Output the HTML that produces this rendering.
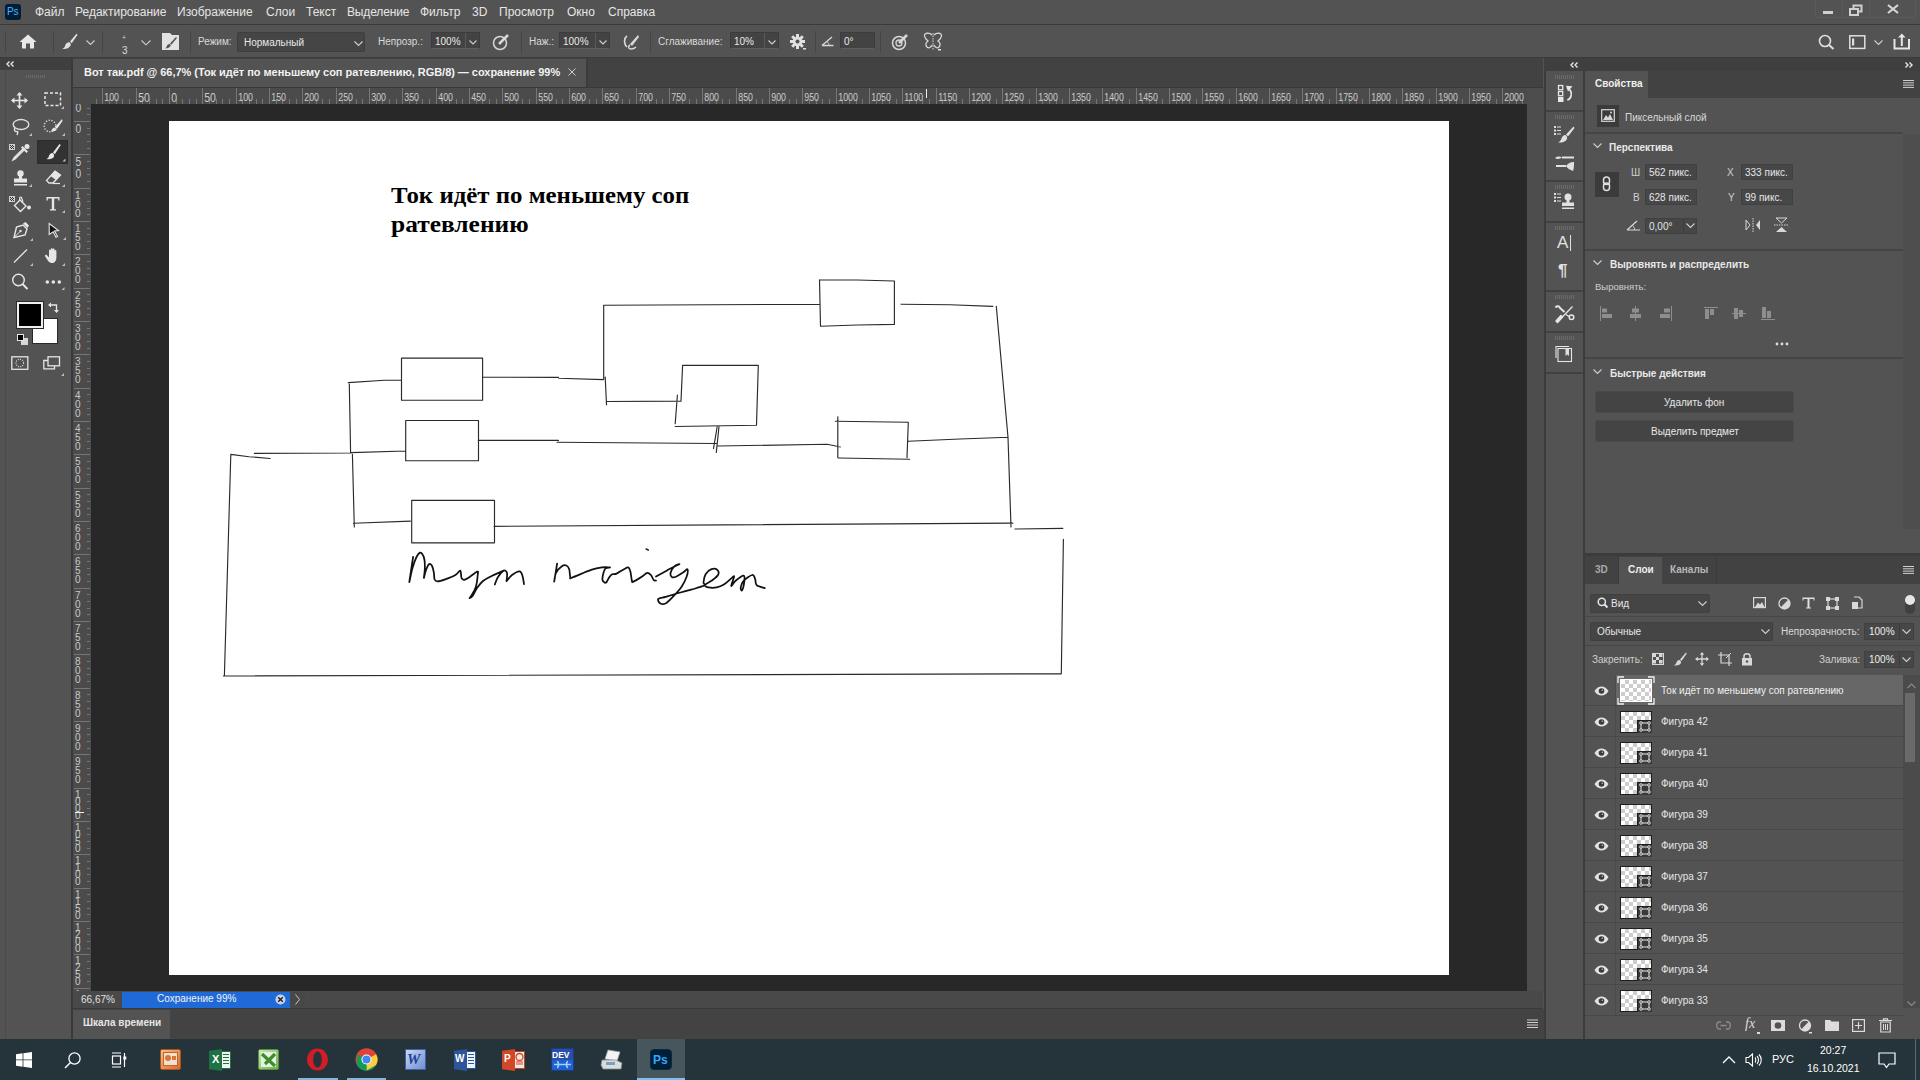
<!DOCTYPE html>
<html><head><meta charset="utf-8">
<style>
*{margin:0;padding:0;box-sizing:border-box}
html,body{width:1920px;height:1080px;overflow:hidden;background:#535353;font-family:"Liberation Sans",sans-serif;color:#d9d9d9}
.a{position:absolute}
.t{position:absolute;white-space:nowrap;line-height:1}
svg{position:absolute;overflow:visible}
</style></head><body>
<!-- MENU BAR -->
<div class="a" style="left:0;top:0;width:1920px;height:24px;background:#535353"></div>
<div class="a" style="left:0;top:24px;width:1920px;height:1px;background:#3a3a3a"></div>
<!-- OPTIONS BAR -->
<div class="a" style="left:0;top:25px;width:1920px;height:33px;background:#535353"></div>
<div class="a" style="left:0;top:57px;width:1920px;height:1px;background:#3b3b3b"></div>
<!-- LEFT TOOLBAR -->
<div class="a" style="left:0;top:58px;width:72px;height:981px;background:#535353"></div>
<div class="a" style="left:0;top:58px;width:71px;height:12px;background:#3f3f3f"></div>
<div class="a" style="left:71px;top:58px;width:2px;height:981px;background:#3a3a3a"></div>
<!-- TAB BAR -->
<div class="a" style="left:73px;top:58px;width:1470px;height:30px;background:#424242"></div>
<div class="a" style="left:73px;top:59px;width:513px;height:28px;background:#535353"></div>
<div class="a" style="left:73px;top:87px;width:1470px;height:1px;background:#383838"></div><div class="a" style="left:586px;top:58px;width:2px;height:29px;background:#3c3c3c"></div>
<!-- RULERS -->
<div class="a" style="left:73px;top:88px;width:1454px;height:16px;background:#4b4b4b"></div>
<div class="a" style="left:73px;top:104px;width:18px;height:887px;background:#4b4b4b"></div>
<!-- CANVAS -->
<div class="a" style="left:91px;top:104px;width:1436px;height:887px;background:#282828"></div>
<div class="a" style="left:169px;top:121px;width:1280px;height:854px;background:#ffffff"></div>
<!--CANVAS START--><div class="t" style="left:391px;top:184px;font-size:23px;font-weight:bold;font-family:'Liberation Serif',serif;color:#000;transform:scaleX(1.08);transform-origin:0 0">Ток идёт по меньшему соп</div><div class="t" style="left:391px;top:213px;font-size:23px;font-weight:bold;font-family:'Liberation Serif',serif;color:#000;transform:scaleX(1.105);transform-origin:0 0">ратевлению</div><svg style="left:0;top:0" width="1920" height="1080"><g fill="none" stroke-linecap="round" stroke-linejoin="round"><path d="M230.8 454.4L224.4 675.5 M223.4 676.0L1061.3 673.8 M1061.3 673.8L1063.4 539.4 M1015.0 529.0L1062.8 528.4 M230.8 454.4L249.0 456.7L270.2 458.5 M254.4 453.4L351.0 453.0 M349.3 384.0L350.6 453.0 M352.4 454.3L354.3 527.0 M348.3 382.6L384.4 380.2L401.5 380.2 M401.5 358.1L482.6 358.1L482.6 400.2L401.5 400.2L401.5 358.1 M482.6 377.2L558.5 377.4 M558.9 378.3L603.3 379.6 M603.7 305.2L603.7 379.3 M603.7 305.2L820.0 304.2 M605.2 377.0L606.5 404.8 M606.5 401.5L681.0 401.1 M681.0 401.1L682.6 365.4L758.3 365.4L756.5 425.2L675.2 426.5 M677.4 395.0L675.2 423.7 M717.2 426.5L713.5 448.7 M719.0 426.5L716.3 452.4 M351.0 452.6L405.7 451.0 M405.7 420.5L478.5 420.5L478.5 460.7L405.7 460.7L405.7 420.5 M478.3 440.4L558.5 440.4 M557.0 442.2L716.3 443.5 M717.2 446.0L827.2 444.3L840.4 447.0 M819.5 279.8L857.0 280.0L894.4 281.0L894.4 324.4L857.0 325.0L820.5 326.2L819.5 279.8 M901.1 304.2L950.0 304.8L992.8 306.4 M996.3 306.4L1008.0 437.2L1011.0 527.0 M835.4 421.3L908.3 422.3L907.0 457.6 M838.4 458.0L909.7 459.2 M837.8 416.8L837.8 457.6 M908.3 441.3L960.0 439.0L1008.0 437.2 M353.5 523.3L410.4 521.1 M411.7 500.4L494.5 500.4L494.5 542.8L411.7 542.8L411.7 500.4 M494.0 526.3L1012.8 523.1" stroke="#2a2a2a" stroke-width="1.15"/><path d="M413.1 556.8C412.5 561.0 409.9 578.0 409.3 582.2 M409.5 581.5C410.0 579.2 411.3 572.1 412.5 568.0C413.7 563.9 415.2 559.6 416.5 557.0C417.8 554.4 419.0 553.0 420.0 552.6C421.0 552.2 421.9 553.3 422.6 554.5C423.4 555.7 424.1 557.5 424.5 560.0C424.9 562.5 424.9 566.2 424.8 569.2C424.7 572.2 424.0 576.5 423.9 577.9 M423.9 577.9C424.3 576.5 425.4 571.5 426.3 569.2C427.2 566.9 428.2 564.6 429.2 564.1C430.2 563.6 431.3 564.5 432.1 566.0C432.9 567.5 433.5 570.5 433.9 572.8C434.3 575.0 434.0 578.1 434.6 579.5C435.2 580.9 435.7 581.4 437.5 581.4C439.3 581.4 442.2 580.5 445.2 579.4C448.2 578.3 453.0 576.4 455.4 575.0C457.8 573.6 458.9 571.2 459.8 570.8C460.7 570.4 460.5 571.3 460.8 572.5C461.1 573.7 461.0 577.0 461.6 578.2C462.2 579.4 462.9 580.0 464.2 579.8C465.5 579.6 467.1 578.6 469.3 577.2C471.5 575.8 475.9 572.0 477.3 571.6C478.7 571.2 477.9 572.5 477.7 575.0C477.5 577.5 476.9 583.3 475.9 586.7C474.9 590.1 472.6 593.5 471.5 595.4C470.4 597.3 469.4 598.2 469.6 598.2C469.8 598.2 471.7 597.1 472.9 595.4C474.1 593.7 475.3 590.4 477.0 588.0C478.7 585.6 480.6 583.0 483.0 581.0C485.4 579.0 487.8 577.9 491.2 576.2C494.6 574.5 501.5 571.5 503.6 570.6 M494.8 584.5C495.3 583.2 496.5 579.3 498.0 577.0C499.5 574.7 502.1 571.3 503.6 570.6C505.1 569.9 506.5 571.2 507.0 573.0C507.5 574.8 506.6 579.8 506.5 581.2 M506.5 581.2C507.4 580.2 509.8 576.6 512.0 575.0C514.2 573.4 517.9 571.2 519.6 571.4C521.4 571.6 521.8 573.9 522.5 576.0C523.2 578.1 523.8 582.8 524.0 584.1 M557.1 563.7C556.6 566.7 554.7 578.6 554.2 581.6 M554.2 581.6C554.5 580.1 554.7 575.3 556.0 572.8C557.3 570.2 560.2 567.5 561.9 566.3C563.6 565.1 565.1 565.0 566.3 565.5C567.5 566.0 568.5 567.2 569.2 569.2C569.9 571.2 569.8 575.8 570.3 577.2C570.8 578.6 568.6 578.8 572.1 577.6C575.6 576.4 586.1 571.6 591.1 569.9C596.1 568.2 598.9 567.8 602.0 567.4C605.1 567.0 608.7 567.4 610.0 567.4 M610.0 567.4C609.3 567.6 606.7 567.5 605.6 568.4C604.5 569.3 604.0 571.0 603.5 572.8C603.0 574.6 602.3 577.8 602.4 579.4C602.5 581.0 603.5 581.8 604.2 582.3C604.9 582.8 605.5 583.1 606.4 582.3C607.2 581.4 608.3 578.5 609.3 577.2C610.3 575.9 611.0 574.9 612.2 574.3C613.4 573.7 614.7 574.5 616.6 573.6C618.5 572.8 622.0 570.2 623.9 569.2C625.8 568.2 627.2 567.0 628.3 567.4C629.4 567.8 629.8 569.2 630.4 571.4C631.0 573.6 631.4 579.1 631.9 580.8C632.4 582.5 631.7 582.3 633.4 581.6C635.1 580.9 639.8 578.0 642.1 576.5C644.4 575.0 645.7 573.0 647.2 572.8C648.7 572.5 649.8 573.8 650.9 575.0C652.0 576.2 652.9 579.2 653.8 580.1C654.6 581.0 655.6 580.4 656.0 580.5 M656.0 576.5C657.8 575.5 663.1 572.6 667.0 570.5C670.9 568.4 677.3 565.2 679.4 564.1 M679.4 564.1C678.5 564.5 675.8 564.8 674.3 566.3C672.8 567.8 671.0 571.0 670.6 572.8C670.2 574.6 671.1 576.6 672.1 577.2C673.1 577.8 674.5 577.4 676.5 576.5C678.5 575.6 682.0 573.3 683.8 572.1C685.6 570.9 686.9 568.5 687.4 569.2C687.9 569.9 687.7 573.6 686.7 576.5C685.7 579.4 683.9 583.3 681.6 586.7C679.3 590.1 675.5 594.1 672.8 596.9C670.1 599.7 667.6 602.4 665.5 603.5C663.4 604.6 661.6 604.2 660.4 603.5C659.2 602.8 657.4 600.2 658.2 599.1C659.1 598.0 662.7 597.8 665.5 596.9C668.3 596.0 670.7 595.2 675.0 594.0C679.3 592.8 686.2 591.0 691.1 589.6C696.0 588.2 702.1 586.8 704.2 585.6C706.3 584.4 703.3 584.2 703.5 582.3C703.7 580.4 704.3 576.5 705.6 574.3C706.9 572.1 709.5 569.9 711.5 569.2C713.5 568.5 716.2 568.9 717.3 569.9C718.4 570.9 719.0 573.2 718.0 575.0C717.0 576.8 713.7 579.1 711.5 580.8C709.3 582.4 705.4 583.8 704.9 584.9C704.4 586.0 706.6 587.0 708.6 587.4C710.6 587.8 714.1 587.9 716.6 587.4C719.1 586.9 721.4 586.1 723.9 584.5C726.4 582.9 730.2 579.2 731.9 577.9C733.6 576.6 734.2 575.4 734.1 576.8C734.0 578.1 731.0 585.3 731.2 586.0C731.5 586.7 733.5 582.5 735.6 580.8C737.7 579.1 742.2 575.6 743.6 575.7C745.0 575.8 744.5 579.2 744.3 581.6C744.0 584.0 742.7 589.3 742.1 590.3C741.5 591.3 740.5 589.0 740.7 587.4C741.0 585.8 741.7 582.9 743.6 580.8C745.5 578.7 750.4 575.2 752.3 575.0C754.2 574.8 754.5 577.7 755.2 579.4C755.9 581.1 755.1 583.8 756.7 585.2C758.3 586.7 763.4 587.6 764.7 588.1" stroke="#111111" stroke-width="1.75"/><path d="M646.2 549.1L648.3 550" stroke="#222" stroke-width="1.6"/></g></svg><!--CANVAS END-->
<!-- scrollbar right -->
<div class="a" style="left:1527px;top:88px;width:17px;height:903px;background:#4d4d4d"></div>
<!-- STATUS BAR -->
<div class="a" style="left:73px;top:991px;width:1470px;height:17px;background:#494949"></div>
<div class="a" style="left:73px;top:1008px;width:1470px;height:1px;background:#3a3a3a"></div>
<!-- TIMELINE -->
<div class="a" style="left:73px;top:1009px;width:1471px;height:30px;background:#434343"></div>
<div class="a" style="left:73px;top:1010px;width:97px;height:29px;background:#535353"></div>
<!-- ICON PANEL -->
<div class="a" style="left:1544px;top:58px;width:376px;height:13px;background:#3f3f3f"></div>
<div class="a" style="left:1544px;top:71px;width:40px;height:968px;background:#535353"></div>


<!-- PROPERTIES PANEL -->
<div class="a" style="left:1585px;top:71px;width:335px;height:484px;background:#535353"></div>
<!-- LAYERS PANEL -->
<div class="a" style="left:1585px;top:556px;width:335px;height:483px;background:#535353"></div>

<!-- MENU CONTENT -->
<div class="a" style="left:5px;top:4px;width:16px;height:16px;background:#001e36;border-radius:3px"></div>
<div class="t" style="left:7px;top:7px;font-size:10px;color:#4cb4ff;letter-spacing:-0.2px">Ps</div>
<div class="t" style="left:35px;top:6px;font-size:12px;color:#e6e6e6">Файл</div>
<div class="t" style="left:75px;top:6px;font-size:12px;color:#e6e6e6">Редактирование</div>
<div class="t" style="left:177px;top:6px;font-size:12px;color:#e6e6e6">Изображение</div>
<div class="t" style="left:266px;top:6px;font-size:12px;color:#e6e6e6">Слои</div>
<div class="t" style="left:306px;top:6px;font-size:12px;color:#e6e6e6">Текст</div>
<div class="t" style="left:347px;top:6px;font-size:12px;color:#e6e6e6;letter-spacing:-0.15px">Выделение</div>
<div class="t" style="left:420px;top:6px;font-size:12px;color:#e6e6e6">Фильтр</div>
<div class="t" style="left:472px;top:6px;font-size:12px;color:#e6e6e6">3D</div>
<div class="t" style="left:499px;top:6px;font-size:12px;color:#e6e6e6">Просмотр</div>
<div class="t" style="left:567px;top:6px;font-size:12px;color:#e6e6e6">Окно</div>
<div class="t" style="left:608px;top:6px;font-size:12px;color:#e6e6e6">Справка</div>
<!-- window buttons -->
<div class="a" style="left:1815px;top:-2px;width:101px;height:20px;border:1px solid #5c5c5c;border-radius:3px"></div>
<div class="a" style="left:1842px;top:0;width:1px;height:17px;background:#5a5a5a"></div>
<div class="a" style="left:1869px;top:0;width:1px;height:17px;background:#5a5a5a"></div>
<div class="a" style="left:1823px;top:11px;width:10px;height:3px;background:#d0d0d0"></div>
<svg style="left:1849px;top:4px" width="14" height="12"><rect x="4.5" y="1.5" width="8" height="6" fill="none" stroke="#d0d0d0" stroke-width="2"/><rect x="1" y="5" width="8" height="6" fill="#535353" stroke="#d0d0d0" stroke-width="2"/></svg>
<svg style="left:1887px;top:4px" width="12" height="10"><path d="M1 1L11 9M11 1L1 9" stroke="#d6d6d6" stroke-width="2.2"/></svg>

<!-- OPTIONS BAR CONTENT -->
<div class="a" style="left:5px;top:31px;width:1px;height:22px;background:#454545"></div>
<div class="a" style="left:53px;top:31px;width:1px;height:22px;background:#454545"></div>
<div class="a" style="left:102px;top:31px;width:1px;height:22px;background:#454545"></div>
<div class="a" style="left:190px;top:31px;width:1px;height:22px;background:#454545"></div>
<div class="a" style="left:521px;top:31px;width:1px;height:22px;background:#454545"></div>
<div class="a" style="left:650px;top:31px;width:1px;height:22px;background:#454545"></div>
<div class="a" style="left:815px;top:31px;width:1px;height:22px;background:#454545"></div>
<div class="a" style="left:880px;top:31px;width:1px;height:22px;background:#454545"></div>
<!-- home -->
<svg style="left:19px;top:34px" width="18" height="15"><path d="M9 0.5L17.5 8H15V14.5H11V9.5H7V14.5H3V8H0.5Z" fill="#e8e8e8"/></svg>
<!-- brush -->
<svg style="left:61px;top:33px" width="17" height="17"><path d="M15.5 0.8L9 8.5L10.8 10.2L16.6 1.8Z" fill="#e0e0e0"/><path d="M8.3 9.2C6 9.2 4.6 10.6 4.2 12.6C3.9 14.2 2.8 15.2 1.2 15.8C4.2 16.4 8 15.6 9.6 12.5C10.2 11.3 9.5 9.8 8.3 9.2Z" fill="#e0e0e0"/></svg>
<svg style="left:86px;top:40px" width="9" height="6"><path d="M0.5 0.5L4.5 4.5L8.5 0.5" fill="none" stroke="#cfcfcf" stroke-width="1.1"/></svg>
<div class="t" style="left:122px;top:34px;font-size:7px;color:#d0d0d0">+</div>
<div class="t" style="left:122px;top:46px;font-size:10px;color:#dcdcdc">3</div>
<svg style="left:141px;top:40px" width="10" height="6"><path d="M0.5 0.5L5 4.8L9.5 0.5" fill="none" stroke="#cfcfcf" stroke-width="1.1"/></svg>
<svg style="left:162px;top:33px" width="18" height="18"><path d="M0 0H8L10 2H17V17H0Z" fill="#e2e2e2"/><path d="M14 4L8 10.5L9.3 11.8L15 5Z" fill="#535353"/><path d="M7.6 11C6 11 5 12 4.8 13.3C4.6 14.3 3.9 15 2.8 15.3C5 15.6 7.5 15 8.5 13C8.9 12.2 8.4 11.3 7.6 11Z" fill="#535353"/></svg>
<div class="t" style="left:198px;top:37px;font-size:10px;color:#d9d9d9">Режим:</div>
<div class="a" style="left:237px;top:32px;width:128px;height:20px;background:#454545;border:1px solid #3e3e3e;border-radius:2px"></div>
<div class="t" style="left:244px;top:38px;font-size:10px;color:#e8e8e8">Нормальный</div>
<svg style="left:354px;top:41px" width="9" height="6"><path d="M0.5 0.5L4.5 4.5L8.5 0.5" fill="none" stroke="#d0d0d0" stroke-width="1.1"/></svg>
<div class="t" style="left:378px;top:37px;font-size:10px;color:#d9d9d9">Непрозр.:</div>
<div class="a" style="left:431px;top:32px;width:49px;height:17px;background:#434343;border:1px solid #3c3c3c;border-bottom-color:#5e5e5e"></div>
<div class="a" style="left:465px;top:33px;width:1px;height:15px;background:#5a5a5a"></div>
<div class="t" style="left:435px;top:37px;font-size:10px;color:#eaeaea">100%</div>
<svg style="left:469px;top:40px" width="8" height="6"><path d="M0.5 0.5L4 4L7.5 0.5" fill="none" stroke="#cfcfcf" stroke-width="1.1"/></svg>
<!-- airbrush-like icon -->
<svg style="left:492px;top:33px" width="18" height="18"><circle cx="8" cy="10" r="6.5" fill="none" stroke="#d8d8d8" stroke-width="1.5"/><path d="M7 11L16 2" stroke="#d8d8d8" stroke-width="2.5"/></svg>
<div class="t" style="left:529px;top:37px;font-size:10px;color:#d9d9d9">Наж.:</div>
<div class="a" style="left:559px;top:32px;width:51px;height:17px;background:#434343;border:1px solid #3c3c3c;border-bottom-color:#5e5e5e"></div>
<div class="a" style="left:595px;top:33px;width:1px;height:15px;background:#5a5a5a"></div>
<div class="t" style="left:563px;top:37px;font-size:10px;color:#eaeaea">100%</div>
<svg style="left:599px;top:40px" width="8" height="6"><path d="M0.5 0.5L4 4L7.5 0.5" fill="none" stroke="#cfcfcf" stroke-width="1.1"/></svg>
<svg style="left:622px;top:33px" width="18" height="18"><path d="M5 3C2 5 1.5 11 5 14" fill="none" stroke="#d8d8d8" stroke-width="1.6"/><path d="M16 2L8 11L10 13L17 4Z" fill="#d8d8d8"/><path d="M8 12C6 13 6 16 9 16C11 16 13 15 14 14" fill="none" stroke="#d8d8d8" stroke-width="1.4"/></svg>
<div class="t" style="left:658px;top:37px;font-size:10px;color:#d9d9d9">Сглаживание:</div>
<div class="a" style="left:730px;top:32px;width:49px;height:17px;background:#434343;border:1px solid #3c3c3c;border-bottom-color:#5e5e5e"></div>
<div class="a" style="left:764px;top:33px;width:1px;height:15px;background:#5a5a5a"></div>
<div class="t" style="left:734px;top:37px;font-size:10px;color:#eaeaea">10%</div>
<svg style="left:768px;top:40px" width="8" height="6"><path d="M0.5 0.5L4 4L7.5 0.5" fill="none" stroke="#cfcfcf" stroke-width="1.1"/></svg>
<svg style="left:790px;top:34px" width="18" height="18"><g fill="#e0e0e0"><circle cx="7.5" cy="7.5" r="4.8"/><rect x="6" y="0" width="3" height="15"/><rect x="0" y="6" width="15" height="3"/><rect x="6" y="0" width="3" height="15" transform="rotate(45 7.5 7.5)"/><rect x="6" y="0" width="3" height="15" transform="rotate(-45 7.5 7.5)"/></g><circle cx="7.5" cy="7.5" r="2" fill="#535353"/><rect x="13" y="14" width="3" height="1.5" fill="#e0e0e0"/></svg>
<svg style="left:821px;top:35px" width="14" height="12"><path d="M1 10.5H12.5M1 10.5L11 2" fill="none" stroke="#d8d8d8" stroke-width="1.3"/><path d="M6 6.5C7.5 7.5 8 9 8 10.5" fill="none" stroke="#d8d8d8" stroke-width="1"/></svg>
<div class="a" style="left:840px;top:32px;width:35px;height:17px;background:#434343;border:1px solid #3c3c3c;border-bottom-color:#5e5e5e"></div>
<div class="t" style="left:844px;top:37px;font-size:10px;color:#eaeaea">0°</div>
<svg style="left:891px;top:33px" width="18" height="18"><circle cx="8" cy="10" r="6.5" fill="none" stroke="#d8d8d8" stroke-width="1.5"/><circle cx="8" cy="10" r="3" fill="none" stroke="#d8d8d8" stroke-width="1.3"/><path d="M8 10L16 2" stroke="#d8d8d8" stroke-width="2.5"/></svg>
<svg style="left:923px;top:32px" width="20" height="20"><path d="M9 3C6 0 1 1 1.5 4C2 7 4 8 5 9C3 10 2 13 4 15C6 17 8 15 9 13" fill="none" stroke="#d8d8d8" stroke-width="1.3"/><path d="M11 3C14 0 19 1 18.5 4C18 7 16 8 15 9C17 10 18 13 16 15C14 17 12 15 11 13" fill="none" stroke="#d8d8d8" stroke-width="1.3"/><path d="M10 1V18" stroke="#d8d8d8" stroke-width="1" stroke-dasharray="1.5 1"/><rect x="15" y="17" width="3" height="1.5" fill="#e0e0e0"/></svg>
<!-- right icons -->
<svg style="left:1818px;top:34px" width="18" height="16"><circle cx="7" cy="7" r="5.5" fill="none" stroke="#e0e0e0" stroke-width="1.6"/><path d="M11 11L15.5 15" stroke="#e0e0e0" stroke-width="2"/></svg>
<svg style="left:1849px;top:35px" width="17" height="15"><rect x="0.8" y="0.8" width="15" height="12.6" fill="none" stroke="#e0e0e0" stroke-width="1.5"/><rect x="3" y="3.5" width="2.2" height="7" fill="#e0e0e0"/></svg>
<svg style="left:1874px;top:40px" width="9" height="6"><path d="M0.5 0.5L4.5 4.5L8.5 0.5" fill="none" stroke="#cfcfcf" stroke-width="1.1"/></svg>
<svg style="left:1893px;top:33px" width="18" height="17"><path d="M1.5 6V15.5H16V6" fill="none" stroke="#e6e6e6" stroke-width="2"/><path d="M8.8 13V3" stroke="#e6e6e6" stroke-width="2"/><path d="M5 4.5L8.8 0.5L12.6 4.5Z" fill="#e6e6e6"/></svg>


<!-- TOOLBAR CONTENT -->
<svg style="left:6px;top:61px" width="8" height="6"><path d="M3.5 0.5L1 3L3.5 5.5M7.5 0.5L5 3L7.5 5.5" fill="none" stroke="#e6e6e6" stroke-width="1.4"/></svg>
<div class="a" style="left:5px;top:69px;width:1px;height:970px;background:#4a4a4a"></div>

<div class="a" style="left:26px;top:75px;width:20px;height:3px;background:repeating-linear-gradient(90deg,#6a6a6a 0 1px,transparent 1px 2px)"></div>
<!-- move -->
<svg style="left:11px;top:92px" width="17" height="17"><path d="M8.5 1V16M1 8.5H16" stroke="#e6e6e6" stroke-width="1.6"/><path d="M8.5 0L5.5 3.5H11.5ZM8.5 17L5.5 13.5H11.5ZM0 8.5L3.5 5.5V11.5ZM17 8.5L13.5 5.5V11.5Z" fill="#e6e6e6"/></svg>
<!-- marquee -->
<svg style="left:44px;top:92px" width="22" height="17"><rect x="1" y="1" width="15.5" height="12.5" fill="none" stroke="#e6e6e6" stroke-width="1.5" stroke-dasharray="3 2"/><path d="M20 14V17H17Z" fill="#bdbdbd"/></svg>
<!-- lasso -->
<svg style="left:12px;top:118px" width="22" height="18"><ellipse cx="9" cy="6.5" rx="7.8" ry="5" fill="none" stroke="#e0e0e0" stroke-width="1.4"/><path d="M3 10C1.5 12 3 14 5 13.5C6 13 6 15 5 17" fill="none" stroke="#e0e0e0" stroke-width="1.4"/><path d="M20 15V18H17Z" fill="#bdbdbd"/></svg>
<!-- quick select -->
<svg style="left:43px;top:118px" width="23" height="18"><circle cx="7" cy="8" r="5.8" fill="none" stroke="#e6e6e6" stroke-width="1.4" stroke-dasharray="1.2 1.6"/><path d="M19 1L12 9L14 11L19.5 3Z" fill="#e6e6e6"/><path d="M11.5 9.5C9.5 9.5 8.8 12 8 13.5C10.5 13.5 13.5 13 13.8 11.3Z" fill="#e6e6e6"/><path d="M22 15V18H19Z" fill="#bdbdbd"/></svg>
<!-- eyedropper -->
<svg style="left:9px;top:143px" width="22" height="18"><rect x="0" y="1" width="6" height="6" fill="#cfcfcf"/><path d="M1 2H2V3H1ZM3 2H4V3H3ZM2 3H3V4H2ZM4 3H5V4H4ZM1 4H2V5H1ZM3 4H4V5H3ZM2 5H3V6H2ZM4 5H5V6H4Z" fill="#333"/><path d="M15 5L5 15L4 17L6 16L16 6" fill="none" stroke="#e6e6e6" stroke-width="1.4"/><path d="M13.5 3L19 8.5L17.5 10L12 4.5Z" fill="#e6e6e6"/><circle cx="18" cy="3.5" r="2.5" fill="#e6e6e6"/></svg>
<!-- selected brush -->
<div class="a" style="left:37px;top:140px;width:31px;height:24px;background:#333333;border:1px solid #2c2c2c"></div>
<svg style="left:45px;top:143px" width="22" height="19"><path d="M14.5 1L8 9.5L9.8 11.2L15.8 2Z" fill="#e6e6e6"/><path d="M7.5 10C5.2 10 4.3 12 3.8 13.6C3.5 14.8 2.8 15.6 1.5 16C4.5 16.6 8 16 9 13.5C9.5 12.2 8.7 10.6 7.5 10Z" fill="#e6e6e6"/><path d="M20.5 15.5V18.5H17.5Z" fill="#bdbdbd"/></svg>
<!-- stamp -->
<svg style="left:13px;top:170px" width="20" height="17"><circle cx="7.5" cy="3.5" r="3.2" fill="#e6e6e6"/><rect x="6" y="5" width="3" height="4" fill="#e6e6e6"/><rect x="1" y="8.5" width="13" height="4" fill="#e6e6e6"/><rect x="1" y="14" width="13" height="1.5" fill="#e6e6e6"/><path d="M19 14V17H16Z" fill="#bdbdbd"/></svg>
<!-- eraser -->
<svg style="left:45px;top:170px" width="21" height="17"><path d="M10 1L15.5 5L8 13H4L1.5 10.5Z" fill="none" stroke="#e6e6e6" stroke-width="1.3"/><path d="M10 1L15.5 5L11 10L5.5 6Z" fill="#e6e6e6"/><path d="M8 13.5H15" stroke="#e6e6e6" stroke-width="1.2"/><path d="M20 14V17H17Z" fill="#bdbdbd"/></svg>
<!-- bucket -->
<svg style="left:9px;top:195px" width="24" height="19"><rect x="0" y="1" width="6" height="6" fill="#cfcfcf"/><path d="M1 2H2V3H1ZM3 2H4V3H3ZM2 3H3V4H2ZM4 3H5V4H4ZM1 4H2V5H1ZM3 4H4V5H3ZM2 5H3V6H2ZM4 5H5V6H4Z" fill="#333"/><path d="M11 5L17 11L11.5 16.5L5.5 10.5Z" fill="none" stroke="#e6e6e6" stroke-width="1.4"/><path d="M11 5C10 3 11 1 12.5 2.5L14 7" fill="none" stroke="#e6e6e6" stroke-width="1.2"/><circle cx="20" cy="12.5" r="2" fill="#e6e6e6"/></svg>
<!-- type -->
<svg style="left:45px;top:196px" width="21" height="18"><path d="M1.5 1H14.5V4.5H13.2V2.6H9.2V13.3H11V14.5H5V13.3H6.8V2.6H2.8V4.5H1.5Z" fill="#e6e6e6"/><path d="M20 14V17H17Z" fill="#bdbdbd"/></svg>
<!-- pen -->
<svg style="left:12px;top:222px" width="22" height="18"><path d="M11 3L15 7L13 13L2 15.5L4.5 5Z" fill="none" stroke="#e6e6e6" stroke-width="1.4"/><path d="M11 1.5L13.5 0L17 3.5L15.5 6" fill="#e6e6e6"/><path d="M2.5 15L8 9.5" stroke="#e6e6e6" stroke-width="1"/><circle cx="8.5" cy="9" r="1.2" fill="#e6e6e6"/><path d="M21 16V19H18Z" fill="#bdbdbd"/></svg>
<!-- path selection arrow -->
<svg style="left:48px;top:222px" width="19" height="18"><path d="M1.2 1.5L10.5 8.5L6.5 9L9.5 14.5L8 15.2L5.2 9.8L1.2 12.5Z" fill="#111" stroke="#e6e6e6" stroke-width="1.1"/><path d="M18 15V18H15Z" fill="#bdbdbd"/></svg>
<!-- line -->
<svg style="left:12px;top:248px" width="22" height="18"><path d="M2 14.5L15 1.5" stroke="#e6e6e6" stroke-width="1.3"/><path d="M21 15V18H18Z" fill="#bdbdbd"/></svg>
<!-- hand -->
<svg style="left:44px;top:247px" width="22" height="19"><path d="M5 8V3.5C5 2.3 6.8 2.3 6.8 3.5V7.5V2.2C6.8 1 8.7 1 8.7 2.2V7.5V2.5C8.7 1.3 10.6 1.3 10.6 2.5V7.8V4C10.6 2.8 12.4 2.8 12.4 4V10.5C12.4 14 10.5 16 8 16C5.5 16 4.5 14.5 3.2 12.5L1.2 9.5C0.5 8.3 2 7.2 3 8.3L5 10.5Z" fill="#e6e6e6"/><path d="M21 16V19H18Z" fill="#bdbdbd"/></svg>
<!-- zoom -->
<svg style="left:11px;top:273px" width="20" height="18"><circle cx="7.5" cy="7" r="5.8" fill="none" stroke="#e6e6e6" stroke-width="1.4"/><path d="M11.5 11L16.5 16" stroke="#e6e6e6" stroke-width="2"/></svg>
<!-- more -->
<svg style="left:44px;top:276px" width="22" height="14"><circle cx="3.3" cy="6" r="1.8" fill="#e6e6e6"/><circle cx="9.3" cy="6" r="1.8" fill="#e6e6e6"/><circle cx="15.3" cy="6" r="1.8" fill="#e6e6e6"/><path d="M20.5 11V14H17.5Z" fill="#bdbdbd"/></svg>
<!-- colors -->
<div class="a" style="left:32px;top:318px;width:26px;height:26px;background:#ffffff;border:1px solid #2a2a2a"></div>
<div class="a" style="left:17px;top:302px;width:26px;height:26px;background:#000;border:2px solid #f0f0f0;outline:1px solid #2a2a2a"></div>
<svg style="left:48px;top:302px" width="12" height="11"><path d="M1.5 3H8.5V9" fill="none" stroke="#e6e6e6" stroke-width="1.3"/><path d="M0 3L3 0.5V5.5ZM8.5 11L6 8H11Z" fill="#e6e6e6"/></svg>
<div class="a" style="left:21px;top:338px;width:7px;height:7px;background:#d8d8d8"></div>
<div class="a" style="left:17px;top:334px;width:7px;height:7px;background:#000;border:1px solid #e6e6e6"></div>
<!-- quick mask -->
<svg style="left:11px;top:356px" width="18" height="15"><rect x="0.8" y="0.8" width="16" height="12.5" fill="none" stroke="#e6e6e6" stroke-width="1.3"/><circle cx="8.8" cy="7" r="3.8" fill="none" stroke="#e6e6e6" stroke-width="1.1" stroke-dasharray="1 1.2"/></svg>
<svg style="left:43px;top:356px" width="22" height="20"><rect x="5" y="0.8" width="11.5" height="9" fill="none" stroke="#e6e6e6" stroke-width="1.3"/><path d="M5 4.5H0.8V12.8H11.5V9.8" fill="none" stroke="#e6e6e6" stroke-width="1.3"/><path d="M21 17V20H18Z" fill="#bdbdbd"/></svg>

<!--RULER START--><svg style="left:0;top:0" width="1527" height="105"><clipPath id="hc"><rect x="92" y="88" width="1435" height="16"/></clipPath><g clip-path="url(#hc)"><path d="M96.5 99V104 M102.5 88V104 M109.5 99V104 M116.5 99V104 M122.5 99V104 M129.5 99V104 M136.5 88V104 M142.5 99V104 M149.5 99V104 M156.5 99V104 M162.5 99V104 M169.5 88V104 M176.5 99V104 M182.5 99V104 M189.5 99V104 M196.5 99V104 M202.5 88V104 M209.5 99V104 M216.5 99V104 M222.5 99V104 M229.5 99V104 M236.5 88V104 M242.5 99V104 M249.5 99V104 M256.5 99V104 M262.5 99V104 M269.5 88V104 M276.5 99V104 M282.5 99V104 M289.5 99V104 M296.5 99V104 M302.5 88V104 M309.5 99V104 M316.5 99V104 M322.5 99V104 M329.5 99V104 M336.5 88V104 M342.5 99V104 M349.5 99V104 M356.5 99V104 M362.5 99V104 M369.5 88V104 M376.5 99V104 M382.5 99V104 M389.5 99V104 M396.5 99V104 M402.5 88V104 M409.5 99V104 M416.5 99V104 M422.5 99V104 M429.5 99V104 M436.5 88V104 M442.5 99V104 M449.5 99V104 M456.5 99V104 M462.5 99V104 M469.5 88V104 M476.5 99V104 M482.5 99V104 M489.5 99V104 M496.5 99V104 M502.5 88V104 M509.5 99V104 M516.5 99V104 M522.5 99V104 M529.5 99V104 M536.5 88V104 M542.5 99V104 M549.5 99V104 M556.5 99V104 M562.5 99V104 M569.5 88V104 M576.5 99V104 M582.5 99V104 M589.5 99V104 M596.5 99V104 M602.5 88V104 M609.5 99V104 M616.5 99V104 M622.5 99V104 M629.5 99V104 M636.5 88V104 M642.5 99V104 M649.5 99V104 M656.5 99V104 M662.5 99V104 M669.5 88V104 M676.5 99V104 M682.5 99V104 M689.5 99V104 M696.5 99V104 M702.5 88V104 M709.5 99V104 M716.5 99V104 M722.5 99V104 M729.5 99V104 M736.5 88V104 M742.5 99V104 M749.5 99V104 M756.5 99V104 M762.5 99V104 M769.5 88V104 M776.5 99V104 M782.5 99V104 M789.5 99V104 M796.5 99V104 M802.5 88V104 M809.5 99V104 M816.5 99V104 M822.5 99V104 M829.5 99V104 M836.5 88V104 M842.5 99V104 M849.5 99V104 M856.5 99V104 M862.5 99V104 M869.5 88V104 M876.5 99V104 M882.5 99V104 M889.5 99V104 M896.5 99V104 M902.5 88V104 M909.5 99V104 M916.5 99V104 M922.5 99V104 M929.5 99V104 M936.5 88V104 M942.5 99V104 M949.5 99V104 M956.5 99V104 M962.5 99V104 M969.5 88V104 M976.5 99V104 M982.5 99V104 M989.5 99V104 M996.5 99V104 M1002.5 88V104 M1009.5 99V104 M1016.5 99V104 M1022.5 99V104 M1029.5 99V104 M1036.5 88V104 M1042.5 99V104 M1049.5 99V104 M1056.5 99V104 M1062.5 99V104 M1069.5 88V104 M1076.5 99V104 M1082.5 99V104 M1089.5 99V104 M1096.5 99V104 M1102.5 88V104 M1109.5 99V104 M1116.5 99V104 M1122.5 99V104 M1129.5 99V104 M1136.5 88V104 M1142.5 99V104 M1149.5 99V104 M1156.5 99V104 M1162.5 99V104 M1169.5 88V104 M1176.5 99V104 M1182.5 99V104 M1189.5 99V104 M1196.5 99V104 M1202.5 88V104 M1209.5 99V104 M1216.5 99V104 M1222.5 99V104 M1229.5 99V104 M1236.5 88V104 M1242.5 99V104 M1249.5 99V104 M1256.5 99V104 M1262.5 99V104 M1269.5 88V104 M1276.5 99V104 M1282.5 99V104 M1289.5 99V104 M1296.5 99V104 M1302.5 88V104 M1309.5 99V104 M1316.5 99V104 M1322.5 99V104 M1329.5 99V104 M1336.5 88V104 M1342.5 99V104 M1349.5 99V104 M1356.5 99V104 M1362.5 99V104 M1369.5 88V104 M1376.5 99V104 M1382.5 99V104 M1389.5 99V104 M1396.5 99V104 M1402.5 88V104 M1409.5 99V104 M1416.5 99V104 M1422.5 99V104 M1429.5 99V104 M1436.5 88V104 M1442.5 99V104 M1449.5 99V104 M1456.5 99V104 M1462.5 99V104 M1469.5 88V104 M1476.5 99V104 M1482.5 99V104 M1489.5 99V104 M1496.5 99V104 M1502.5 88V104 M1509.5 99V104 M1516.5 99V104 M1522.5 99V104" stroke="#767676" stroke-width="1"/><g font-family="Liberation Sans" fill="#cccccc"><text transform="scale(0.8,1)" x="130.4" y="101" font-size="11">100</text><text transform="scale(0.84,1)" x="164.6" y="102" font-size="12.5">50</text><text transform="scale(0.84,1)" x="203.9" y="102" font-size="12.5">0</text><text transform="scale(0.84,1)" x="243.2" y="102" font-size="12.5">50</text><text transform="scale(0.8,1)" x="297.9" y="101" font-size="11">100</text><text transform="scale(0.8,1)" x="339.1" y="101" font-size="11">150</text><text transform="scale(0.8,1)" x="380.4" y="101" font-size="11">200</text><text transform="scale(0.8,1)" x="422.9" y="101" font-size="11">250</text><text transform="scale(0.8,1)" x="464.1" y="101" font-size="11">300</text><text transform="scale(0.8,1)" x="505.4" y="101" font-size="11">350</text><text transform="scale(0.8,1)" x="547.9" y="101" font-size="11">400</text><text transform="scale(0.8,1)" x="589.1" y="101" font-size="11">450</text><text transform="scale(0.8,1)" x="630.4" y="101" font-size="11">500</text><text transform="scale(0.8,1)" x="672.9" y="101" font-size="11">550</text><text transform="scale(0.8,1)" x="714.1" y="101" font-size="11">600</text><text transform="scale(0.8,1)" x="755.4" y="101" font-size="11">650</text><text transform="scale(0.8,1)" x="797.9" y="101" font-size="11">700</text><text transform="scale(0.8,1)" x="839.1" y="101" font-size="11">750</text><text transform="scale(0.8,1)" x="880.4" y="101" font-size="11">800</text><text transform="scale(0.8,1)" x="922.9" y="101" font-size="11">850</text><text transform="scale(0.8,1)" x="964.1" y="101" font-size="11">900</text><text transform="scale(0.8,1)" x="1005.4" y="101" font-size="11">950</text><text transform="scale(0.8,1)" x="1047.9" y="101" font-size="11">1000</text><text transform="scale(0.8,1)" x="1089.1" y="101" font-size="11">1050</text><text transform="scale(0.8,1)" x="1130.4" y="101" font-size="11">1100</text><text transform="scale(0.8,1)" x="1172.9" y="101" font-size="11">1150</text><text transform="scale(0.8,1)" x="1214.1" y="101" font-size="11">1200</text><text transform="scale(0.8,1)" x="1255.4" y="101" font-size="11">1250</text><text transform="scale(0.8,1)" x="1297.9" y="101" font-size="11">1300</text><text transform="scale(0.8,1)" x="1339.1" y="101" font-size="11">1350</text><text transform="scale(0.8,1)" x="1380.4" y="101" font-size="11">1400</text><text transform="scale(0.8,1)" x="1422.9" y="101" font-size="11">1450</text><text transform="scale(0.8,1)" x="1464.1" y="101" font-size="11">1500</text><text transform="scale(0.8,1)" x="1505.4" y="101" font-size="11">1550</text><text transform="scale(0.8,1)" x="1547.9" y="101" font-size="11">1600</text><text transform="scale(0.8,1)" x="1589.1" y="101" font-size="11">1650</text><text transform="scale(0.8,1)" x="1630.4" y="101" font-size="11">1700</text><text transform="scale(0.8,1)" x="1672.9" y="101" font-size="11">1750</text><text transform="scale(0.8,1)" x="1714.1" y="101" font-size="11">1800</text><text transform="scale(0.8,1)" x="1755.4" y="101" font-size="11">1850</text><text transform="scale(0.8,1)" x="1797.9" y="101" font-size="11">1900</text><text transform="scale(0.8,1)" x="1839.1" y="101" font-size="11">1950</text><text transform="scale(0.8,1)" x="1880.4" y="101" font-size="11">2000</text></g></g></svg><svg style="left:0;top:0" width="92" height="991"><clipPath id="vc"><rect x="73" y="104" width="18" height="887"/></clipPath><g clip-path="url(#vc)"><path d="M87 108.5H90 M87 114.5H90 M74 121.5H90 M87 128.5H90 M87 134.5H90 M87 141.5H90 M87 148.5H90 M74 154.5H90 M87 161.5H90 M87 168.5H90 M87 174.5H90 M87 181.5H90 M74 188.5H90 M87 194.5H90 M87 201.5H90 M87 208.5H90 M87 214.5H90 M74 221.5H90 M87 228.5H90 M87 234.5H90 M87 241.5H90 M87 248.5H90 M74 254.5H90 M87 261.5H90 M87 268.5H90 M87 274.5H90 M87 281.5H90 M74 288.5H90 M87 294.5H90 M87 301.5H90 M87 308.5H90 M87 314.5H90 M74 321.5H90 M87 328.5H90 M87 334.5H90 M87 341.5H90 M87 348.5H90 M74 354.5H90 M87 361.5H90 M87 368.5H90 M87 374.5H90 M87 381.5H90 M74 388.5H90 M87 394.5H90 M87 401.5H90 M87 408.5H90 M87 414.5H90 M74 421.5H90 M87 428.5H90 M87 434.5H90 M87 441.5H90 M87 448.5H90 M74 454.5H90 M87 461.5H90 M87 468.5H90 M87 474.5H90 M87 481.5H90 M74 488.5H90 M87 494.5H90 M87 501.5H90 M87 508.5H90 M87 514.5H90 M74 521.5H90 M87 528.5H90 M87 534.5H90 M87 541.5H90 M87 548.5H90 M74 554.5H90 M87 561.5H90 M87 568.5H90 M87 574.5H90 M87 581.5H90 M74 588.5H90 M87 594.5H90 M87 601.5H90 M87 608.5H90 M87 614.5H90 M74 621.5H90 M87 628.5H90 M87 634.5H90 M87 641.5H90 M87 648.5H90 M74 654.5H90 M87 661.5H90 M87 668.5H90 M87 674.5H90 M87 681.5H90 M74 688.5H90 M87 694.5H90 M87 701.5H90 M87 708.5H90 M87 714.5H90 M74 721.5H90 M87 728.5H90 M87 734.5H90 M87 741.5H90 M87 748.5H90 M74 754.5H90 M87 761.5H90 M87 768.5H90 M87 774.5H90 M87 781.5H90 M74 788.5H90 M87 794.5H90 M87 801.5H90 M87 808.5H90 M87 814.5H90 M74 821.5H90 M87 828.5H90 M87 834.5H90 M87 841.5H90 M87 848.5H90 M74 854.5H90 M87 861.5H90 M87 868.5H90 M87 874.5H90 M87 881.5H90 M74 888.5H90 M87 894.5H90 M87 901.5H90 M87 908.5H90 M87 914.5H90 M74 921.5H90 M87 928.5H90 M87 934.5H90 M87 941.5H90 M87 948.5H90 M74 954.5H90 M87 961.5H90 M87 968.5H90 M87 974.5H90 M87 981.5H90 M74 988.5H90" stroke="#767676" stroke-width="1"/><g font-family="Liberation Sans" font-size="10" fill="#c8c8c8"><text x="75" y="31.7" font-size="10">1</text><text x="75" y="40.7" font-size="10">5</text><text x="75" y="49.7" font-size="10">0</text><text x="75" y="64.7" font-size="10">1</text><text x="75" y="73.7" font-size="10">0</text><text x="75" y="82.7" font-size="10">0</text><text transform="scale(0.85,1)" x="88.8" y="100.5" font-size="12">5</text><text transform="scale(0.85,1)" x="88.8" y="112.5" font-size="12">0</text><text transform="scale(0.85,1)" x="88.8" y="133.5" font-size="12">0</text><text transform="scale(0.85,1)" x="88.8" y="166.5" font-size="12">5</text><text transform="scale(0.85,1)" x="88.8" y="178.5" font-size="12">0</text><text x="75" y="198.7" font-size="10">1</text><text x="75" y="207.7" font-size="10">0</text><text x="75" y="216.7" font-size="10">0</text><text x="75" y="231.7" font-size="10">1</text><text x="75" y="240.7" font-size="10">5</text><text x="75" y="249.7" font-size="10">0</text><text x="75" y="264.7" font-size="10">2</text><text x="75" y="273.7" font-size="10">0</text><text x="75" y="282.7" font-size="10">0</text><text x="75" y="298.7" font-size="10">2</text><text x="75" y="307.7" font-size="10">5</text><text x="75" y="316.7" font-size="10">0</text><text x="75" y="331.7" font-size="10">3</text><text x="75" y="340.7" font-size="10">0</text><text x="75" y="349.7" font-size="10">0</text><text x="75" y="364.7" font-size="10">3</text><text x="75" y="373.7" font-size="10">5</text><text x="75" y="382.7" font-size="10">0</text><text x="75" y="398.7" font-size="10">4</text><text x="75" y="407.7" font-size="10">0</text><text x="75" y="416.7" font-size="10">0</text><text x="75" y="431.7" font-size="10">4</text><text x="75" y="440.7" font-size="10">5</text><text x="75" y="449.7" font-size="10">0</text><text x="75" y="464.7" font-size="10">5</text><text x="75" y="473.7" font-size="10">0</text><text x="75" y="482.7" font-size="10">0</text><text x="75" y="498.7" font-size="10">5</text><text x="75" y="507.7" font-size="10">5</text><text x="75" y="516.7" font-size="10">0</text><text x="75" y="531.7" font-size="10">6</text><text x="75" y="540.7" font-size="10">0</text><text x="75" y="549.7" font-size="10">0</text><text x="75" y="564.7" font-size="10">6</text><text x="75" y="573.7" font-size="10">5</text><text x="75" y="582.7" font-size="10">0</text><text x="75" y="598.7" font-size="10">7</text><text x="75" y="607.7" font-size="10">0</text><text x="75" y="616.7" font-size="10">0</text><text x="75" y="631.7" font-size="10">7</text><text x="75" y="640.7" font-size="10">5</text><text x="75" y="649.7" font-size="10">0</text><text x="75" y="664.7" font-size="10">8</text><text x="75" y="673.7" font-size="10">0</text><text x="75" y="682.7" font-size="10">0</text><text x="75" y="698.7" font-size="10">8</text><text x="75" y="707.7" font-size="10">5</text><text x="75" y="716.7" font-size="10">0</text><text x="75" y="731.7" font-size="10">9</text><text x="75" y="740.7" font-size="10">0</text><text x="75" y="749.7" font-size="10">0</text><text x="75" y="764.7" font-size="10">9</text><text x="75" y="773.7" font-size="10">5</text><text x="75" y="782.7" font-size="10">0</text><text x="75" y="798.3" font-size="10">1</text><text x="75" y="805.3" font-size="10">0</text><text x="75" y="812.3" font-size="10">0</text><text x="75" y="819.3" font-size="10">0</text><text x="75" y="831.3" font-size="10">1</text><text x="75" y="838.3" font-size="10">0</text><text x="75" y="845.3" font-size="10">5</text><text x="75" y="852.3" font-size="10">0</text><text x="75" y="864.3" font-size="10">1</text><text x="75" y="871.3" font-size="10">1</text><text x="75" y="878.3" font-size="10">0</text><text x="75" y="885.3" font-size="10">0</text><text x="75" y="898.3" font-size="10">1</text><text x="75" y="905.3" font-size="10">1</text><text x="75" y="912.3" font-size="10">5</text><text x="75" y="919.3" font-size="10">0</text><text x="75" y="931.3" font-size="10">1</text><text x="75" y="938.3" font-size="10">2</text><text x="75" y="945.3" font-size="10">0</text><text x="75" y="952.3" font-size="10">0</text><text x="75" y="964.3" font-size="10">1</text><text x="75" y="971.3" font-size="10">2</text><text x="75" y="978.3" font-size="10">5</text><text x="75" y="985.3" font-size="10">0</text><text x="75" y="998.3" font-size="10">1</text><text x="75" y="1005.3" font-size="10">3</text><text x="75" y="1012.3" font-size="10">0</text><text x="75" y="1019.3" font-size="10">0</text></g></g></svg><!--RULER END-->

<div class="a" style="left:926px;top:89px;width:1px;height:9px;background:#f0f0f0"></div><div class="a" style="left:75px;top:812px;width:9px;height:1px;background:#f0f0f0"></div>
<!-- TAB CONTENT -->
<div class="t" style="left:84px;top:67px;font-size:11px;font-weight:bold;color:#f2f2f2;letter-spacing:-0.04px">Вот так.pdf @ 66,7% (Ток идёт по меньшему соп ратевлению, RGB/8) — сохранение 99%</div>
<svg style="left:568px;top:68px" width="8" height="8"><path d="M0.5 0.5L7.5 7.5M7.5 0.5L0.5 7.5" stroke="#cfcfcf" stroke-width="1"/></svg>
<!-- STATUS CONTENT -->
<div class="t" style="left:81px;top:995px;font-size:10px;color:#e0e0e0">66,67%</div>
<div class="a" style="left:122px;top:992px;width:168px;height:16px;background:#1f6ad6"></div>
<div class="t" style="left:157px;top:994px;font-size:10px;color:#f4f4f4">Сохранение 99%</div>
<svg style="left:275px;top:994px" width="11" height="11"><circle cx="5.5" cy="5.5" r="5" fill="#c7d3e8"/><path d="M3.2 3.2L7.8 7.8M7.8 3.2L3.2 7.8" stroke="#1a1a1a" stroke-width="1.3"/></svg>
<div class="a" style="left:290px;top:992px;width:15px;height:15px;background:#474747"></div>
<svg style="left:295px;top:994px" width="6" height="11"><path d="M0.5 0.5L4.5 5.5L0.5 10.5" fill="none" stroke="#c8c8c8" stroke-width="1"/></svg>
<!-- TIMELINE CONTENT -->
<div class="t" style="left:83px;top:1018px;font-size:10px;font-weight:bold;color:#e6e6e6">Шкала времени</div>
<svg style="left:1527px;top:1019px" width="12" height="10"><path d="M0 1H11M0 3.5H11M0 6H11M0 8.5H11" stroke="#d0d0d0" stroke-width="1"/></svg>


<!-- RIGHT COLLAPSE BAR -->
<svg style="left:1570px;top:62px" width="8" height="6"><path d="M3.5 0.5L1 3L3.5 5.5M7.5 0.5L5 3L7.5 5.5" fill="none" stroke="#e6e6e6" stroke-width="1.4"/></svg>
<svg style="left:1905px;top:62px" width="8" height="6"><path d="M0.5 0.5L3 3L0.5 5.5M4.5 0.5L7 3L4.5 5.5" fill="none" stroke="#e6e6e6" stroke-width="1.4"/></svg>
<!-- ICON PANEL groups -->
<div class="a" style="left:1544px;top:71px;width:2px;height:968px;background:#3c3c3c"></div>
<div class="a" style="left:1583px;top:71px;width:2px;height:968px;background:#3c3c3c"></div>
<div class="a" style="left:1546px;top:110px;width:37px;height:2px;background:#404040"></div>
<div class="a" style="left:1546px;top:180px;width:37px;height:2px;background:#404040"></div>
<div class="a" style="left:1546px;top:221px;width:37px;height:2px;background:#404040"></div>
<div class="a" style="left:1546px;top:290px;width:37px;height:2px;background:#404040"></div>
<div class="a" style="left:1546px;top:331px;width:37px;height:2px;background:#404040"></div>
<div class="a" style="left:1546px;top:372px;width:37px;height:2px;background:#404040"></div>
<div class="a" style="left:1555px;top:75px;width:20px;height:4px;background:repeating-linear-gradient(90deg,#6a6a6a 0 1px,transparent 1px 2px)"></div><div class="a" style="left:1555px;top:115px;width:20px;height:4px;background:repeating-linear-gradient(90deg,#6a6a6a 0 1px,transparent 1px 2px)"></div><div class="a" style="left:1555px;top:185px;width:20px;height:4px;background:repeating-linear-gradient(90deg,#6a6a6a 0 1px,transparent 1px 2px)"></div><div class="a" style="left:1555px;top:226px;width:20px;height:4px;background:repeating-linear-gradient(90deg,#6a6a6a 0 1px,transparent 1px 2px)"></div><div class="a" style="left:1555px;top:295px;width:20px;height:4px;background:repeating-linear-gradient(90deg,#6a6a6a 0 1px,transparent 1px 2px)"></div><div class="a" style="left:1555px;top:336px;width:20px;height:4px;background:repeating-linear-gradient(90deg,#6a6a6a 0 1px,transparent 1px 2px)"></div>
<svg style="left:1557px;top:84px" width="17" height="19"><rect x="1.5" y="1.5" width="4.2" height="4.2" fill="none" stroke="#e8e8e8" stroke-width="1.3"/><rect x="1.5" y="7.5" width="4.2" height="4.2" fill="none" stroke="#e8e8e8" stroke-width="1.3"/><rect x="1" y="13" width="5.5" height="5" fill="#e8e8e8"/><path d="M10 4C13.5 5 15 8.5 14 12C13.5 14 12 15.5 10.3 16" fill="none" stroke="#e8e8e8" stroke-width="1.7"/><path d="M9 1.8L15.5 2.2L11 7.5Z" fill="#e8e8e8"/></svg>
<svg style="left:1554px;top:125px" width="21" height="19"><rect x="0" y="1" width="2" height="2" fill="#e0e0e0"/><rect x="0" y="4.5" width="2" height="2" fill="#e0e0e0"/><rect x="0" y="8" width="2" height="2" fill="#e0e0e0"/><path d="M3 2H7M3 5.5H7M3 9H7" stroke="#e0e0e0" stroke-width="1.2"/><path d="M19.5 1.5L12 9.5L14 11.5L20.5 3Z" fill="#e0e0e0"/><path d="M11.5 10C9 10 8 12 7.5 13.5C7 15 6 16.5 4 17.5C7.5 18 11.5 17 13 14C13.5 12.5 12.8 10.8 11.5 10Z" fill="#e0e0e0"/></svg>
<svg style="left:1554px;top:154px" width="21" height="18"><path d="M1 4C3 2 6 2 8 3.5C6 5 3 5.5 1 4Z" fill="#e0e0e0"/><path d="M8 3.5H20" stroke="#e0e0e0" stroke-width="2"/><path d="M2 12H12" stroke="#e0e0e0" stroke-width="2"/><path d="M12 12C14 9 18 7.5 20 8C20 11 20 15 19 17C16 16 13 14 12 12Z" fill="#e0e0e0"/></svg>
<svg style="left:1554px;top:192px" width="21" height="18"><rect x="0" y="1" width="2" height="2" fill="#e0e0e0"/><rect x="0" y="4.5" width="2" height="2" fill="#e0e0e0"/><rect x="0" y="8" width="2" height="2" fill="#e0e0e0"/><path d="M3 2H7M3 5.5H7M3 9H7" stroke="#e0e0e0" stroke-width="1.2"/><circle cx="14" cy="5" r="3.5" fill="#e0e0e0"/><rect x="12.5" y="7" width="3" height="4" fill="#e0e0e0"/><rect x="8" y="10.5" width="12" height="3.5" fill="#e0e0e0"/><rect x="8" y="15.5" width="12" height="1.5" fill="#e0e0e0"/></svg>
<div class="t" style="left:1557px;top:234px;font-size:17px;color:#e0e0e0">A</div>
<div class="a" style="left:1570px;top:235px;width:1px;height:16px;background:#e0e0e0"></div>
<div class="t" style="left:1558px;top:262px;font-size:17px;font-weight:bold;color:#e0e0e0">¶</div>
<svg style="left:1554px;top:305px" width="21" height="19"><path d="M18.5 1.5L4 16.5" stroke="#e6e6e6" stroke-width="1.3"/><path d="M8.5 12L3.5 17.5L2 16L7 10.5Z" fill="#e6e6e6" stroke="#e6e6e6" stroke-width="1.5" stroke-linejoin="round"/><path d="M1.5 2.5C3 0.8 5.5 1 6 3L10.5 7" fill="none" stroke="#e6e6e6" stroke-width="2"/><path d="M1 3.5L4 4" stroke="#535353" stroke-width="1"/><path d="M12 9.5L15 11.5" stroke="#e6e6e6" stroke-width="1.3"/><circle cx="17.5" cy="12.3" r="2.3" fill="none" stroke="#e6e6e6" stroke-width="1.5"/></svg>
<svg style="left:1555px;top:345px" width="18" height="18"><path d="M1 13V1.5H14" fill="none" stroke="#e6e6e6" stroke-width="1.1"/><rect x="3" y="3.5" width="13.5" height="13" fill="none" stroke="#e6e6e6" stroke-width="1.1"/><path d="M10.5 3.5H14V11L12.2 9.5L10.5 11Z" fill="#dcdcdc"/></svg>

<!-- PROPERTIES PANEL -->
<div class="a" style="left:1585px;top:71px;width:335px;height:27px;background:#424242"></div>
<div class="a" style="left:1585px;top:71px;width:63px;height:27px;background:#535353"></div>
<div class="t" style="left:1595px;top:79px;font-size:10px;font-weight:bold;color:#efefef">Свойства</div>
<svg style="left:1903px;top:80px" width="11" height="9"><path d="M0 0.5H11M0 2.8H11M0 5.1H11M0 7.4H11" stroke="#d0d0d0" stroke-width="1"/></svg>
<div class="a" style="left:1597px;top:105px;width:22px;height:22px;background:#3b3b3b"></div>
<svg style="left:1601px;top:109px" width="14" height="13"><rect x="0.7" y="0.7" width="12.6" height="11.6" fill="none" stroke="#d8d8d8" stroke-width="1.2"/><path d="M2 11L5 6L7 8.5L9 5L12 11Z" fill="#d8d8d8"/><circle cx="10" cy="3.5" r="1" fill="#d8d8d8"/></svg>
<div class="t" style="left:1625px;top:113px;font-size:10px;color:#d9d9d9">Пиксельный слой</div>
<div class="a" style="left:1585px;top:132px;width:318px;height:2px;background:#454545"></div>
<div class="a" style="left:1903px;top:134px;width:17px;height:395px;background:#4e4e4e"></div>
<svg style="left:1593px;top:143px" width="9" height="6"><path d="M0.5 0.5L4.5 4.5L8.5 0.5" fill="none" stroke="#cfcfcf" stroke-width="1.1"/></svg>
<div class="t" style="left:1609px;top:143px;font-size:10px;font-weight:bold;color:#e8e8e8">Перспектива</div>
<div class="a" style="left:1595px;top:172px;width:24px;height:25px;background:#3b3b3b"></div>
<svg style="left:1602px;top:176px" width="10" height="16"><rect x="1.5" y="1" width="6" height="7.5" rx="3" fill="none" stroke="#e0e0e0" stroke-width="1.5"/><rect x="1.5" y="7" width="6" height="7.5" rx="3" fill="none" stroke="#e0e0e0" stroke-width="1.5"/></svg>
<div class="t" style="left:1631px;top:168px;font-size:10px;color:#d0d0d0">Ш</div>
<div class="a" style="left:1645px;top:164px;width:52px;height:16px;background:#474747;border:1px solid #404040"></div>
<div class="t" style="left:1649px;top:168px;font-size:10px;color:#e6e6e6">562 пикс.</div>
<div class="t" style="left:1727px;top:168px;font-size:10px;color:#d0d0d0">X</div>
<div class="a" style="left:1741px;top:164px;width:52px;height:16px;background:#474747;border:1px solid #404040"></div>
<div class="t" style="left:1745px;top:168px;font-size:10px;color:#e6e6e6">333 пикс.</div>
<div class="t" style="left:1633px;top:193px;font-size:10px;color:#d0d0d0">В</div>
<div class="a" style="left:1645px;top:189px;width:52px;height:16px;background:#474747;border:1px solid #404040"></div>
<div class="t" style="left:1649px;top:193px;font-size:10px;color:#e6e6e6">628 пикс.</div>
<div class="t" style="left:1728px;top:193px;font-size:10px;color:#d0d0d0">Y</div>
<div class="a" style="left:1741px;top:189px;width:52px;height:16px;background:#474747;border:1px solid #404040"></div>
<div class="t" style="left:1745px;top:193px;font-size:10px;color:#e6e6e6">99 пикс.</div>
<svg style="left:1626px;top:219px" width="15" height="12"><path d="M1 11H14M1 11L11 2" fill="none" stroke="#d8d8d8" stroke-width="1.2"/><path d="M6.5 6.5C8 7.5 8.5 9 8.5 11" fill="none" stroke="#d8d8d8" stroke-width="1"/></svg>
<div class="a" style="left:1645px;top:218px;width:52px;height:16px;background:#474747;border:1px solid #404040"></div>
<div class="a" style="left:1683px;top:219px;width:1px;height:14px;background:#3c3c3c"></div>
<div class="t" style="left:1649px;top:222px;font-size:10px;color:#e6e6e6">0,00°</div>
<svg style="left:1686px;top:223px" width="9" height="6"><path d="M0.5 0.5L4.5 4.5L8.5 0.5" fill="none" stroke="#cfcfcf" stroke-width="1.1"/></svg>
<svg style="left:1745px;top:218px" width="16" height="14"><path d="M1 2V12L5 7Z" fill="none" stroke="#d8d8d8" stroke-width="1"/><path d="M15 2V12L11 7Z" fill="#d8d8d8"/><path d="M8 0V14" stroke="#d8d8d8" stroke-width="1" stroke-dasharray="1.5 1"/></svg>
<svg style="left:1774px;top:217px" width="15" height="16"><path d="M2 1H13L7.5 6Z" fill="none" stroke="#d8d8d8" stroke-width="1"/><path d="M2 15H13L7.5 10Z" fill="#d8d8d8"/><path d="M0 8H15" stroke="#d8d8d8" stroke-width="1" stroke-dasharray="1.5 1"/></svg>
<div class="a" style="left:1585px;top:249px;width:318px;height:2px;background:#454545"></div>
<svg style="left:1593px;top:260px" width="9" height="6"><path d="M0.5 0.5L4.5 4.5L8.5 0.5" fill="none" stroke="#cfcfcf" stroke-width="1.1"/></svg>
<div class="t" style="left:1610px;top:260px;font-size:10px;font-weight:bold;color:#e8e8e8">Выровнять и распределить</div>
<div class="t" style="left:1595px;top:282px;font-size:9.5px;color:#cfcfcf">Выровнять:</div>
<svg style="left:1600px;top:305px" width="180" height="18"><g fill="#8e8e8e"><rect x="0" y="1" width="1" height="15"/><rect x="2" y="3.5" width="5" height="4"/><rect x="2" y="9" width="10" height="4"/>
<rect x="35" y="1" width="1" height="15"/><rect x="32" y="3.5" width="7" height="4"/><rect x="30" y="9" width="11" height="4"/>
<rect x="71" y="1" width="1" height="15"/><rect x="64" y="3.5" width="6" height="4"/><rect x="60" y="9" width="10" height="4"/>
<rect x="104" y="2" width="14" height="1"/><rect x="105" y="4" width="4" height="10"/><rect x="110" y="4" width="4" height="6"/>
<rect x="132" y="8" width="14" height="1"/><rect x="134" y="3" width="4" height="11"/><rect x="139" y="5" width="4" height="7"/>
<rect x="161" y="14" width="14" height="1"/><rect x="162" y="2" width="4" height="11"/><rect x="167" y="6" width="4" height="7"/></g></svg>
<svg style="left:1775px;top:342px" width="15" height="4"><circle cx="2" cy="2" r="1.4" fill="#dcdcdc"/><circle cx="7" cy="2" r="1.4" fill="#dcdcdc"/><circle cx="12" cy="2" r="1.4" fill="#dcdcdc"/></svg>
<div class="a" style="left:1585px;top:357px;width:318px;height:2px;background:#454545"></div>
<svg style="left:1593px;top:369px" width="9" height="6"><path d="M0.5 0.5L4.5 4.5L8.5 0.5" fill="none" stroke="#cfcfcf" stroke-width="1.1"/></svg>
<div class="t" style="left:1610px;top:369px;font-size:10px;font-weight:bold;color:#e8e8e8">Быстрые действия</div>
<div class="a" style="left:1595px;top:391px;width:199px;height:22px;background:#444444;border:1px solid #4a4a4a;border-radius:3px"></div>
<div class="t" style="left:1664px;top:398px;font-size:10px;color:#e8e8e8">Удалить фон</div>
<div class="a" style="left:1595px;top:420px;width:199px;height:22px;background:#444444;border:1px solid #4a4a4a;border-radius:3px"></div>
<div class="t" style="left:1651px;top:427px;font-size:10px;color:#e8e8e8">Выделить предмет</div>
<div class="a" style="left:1585px;top:553px;width:335px;height:3px;background:#3c3c3c"></div>


<!-- LAYERS PANEL -->
<div class="a" style="left:1585px;top:556px;width:335px;height:28px;background:#424242"></div>
<div class="a" style="left:1618px;top:556px;width:1px;height:28px;background:#3a3a3a"></div>
<div class="a" style="left:1619px;top:557px;width:43px;height:27px;background:#535353"></div>
<div class="a" style="left:1716px;top:556px;width:1px;height:28px;background:#3a3a3a"></div>
<div class="t" style="left:1595px;top:565px;font-size:10px;font-weight:bold;color:#a8a8a8">3D</div>
<div class="t" style="left:1628px;top:565px;font-size:10px;font-weight:bold;color:#f0f0f0">Слои</div>
<div class="t" style="left:1670px;top:565px;font-size:10px;font-weight:bold;color:#b8b8b8">Каналы</div>
<svg style="left:1903px;top:566px" width="11" height="9"><path d="M0 0.5H11M0 2.8H11M0 5.1H11M0 7.4H11" stroke="#d0d0d0" stroke-width="1"/></svg>
<div class="a" style="left:1590px;top:594px;width:120px;height:19px;background:#454545;border:1px solid #404040;border-radius:2px"></div>
<svg style="left:1597px;top:597px" width="12" height="12"><circle cx="4.8" cy="4.8" r="3.6" fill="none" stroke="#e6e6e6" stroke-width="1.5"/><path d="M7.5 7.5L10.5 10.5" stroke="#e6e6e6" stroke-width="2"/></svg>
<div class="t" style="left:1611px;top:599px;font-size:10px;color:#e6e6e6">Вид</div>
<svg style="left:1698px;top:601px" width="9" height="6"><path d="M0.5 0.5L4.5 4.5L8.5 0.5" fill="none" stroke="#cfcfcf" stroke-width="1.1"/></svg>
<svg style="left:1753px;top:597px" width="13" height="12"><rect x="0.6" y="0.6" width="11.8" height="10" fill="none" stroke="#d8d8d8" stroke-width="1.2"/><path d="M2 10L5 5.5L7 7.5L9 5L11.5 10Z" fill="#d8d8d8"/></svg>
<svg style="left:1778px;top:597px" width="13" height="13"><circle cx="6.5" cy="6.5" r="5.5" fill="none" stroke="#d8d8d8" stroke-width="1.3"/><path d="M10.4 2.6A5.5 5.5 0 0 1 2.6 10.4Z" fill="#d8d8d8"/></svg>
<svg style="left:1802px;top:597px" width="13" height="12"><path d="M0.5 0.5H12.5V3.5H11.5V2H7.5V10.5H9V11.5H4V10.5H5.5V2H1.5V3.5H0.5Z" fill="#e0e0e0"/></svg>
<svg style="left:1826px;top:597px" width="13" height="13"><rect x="2" y="2" width="9" height="9" fill="none" stroke="#d8d8d8" stroke-width="1.2"/><rect x="0" y="0" width="4" height="4" fill="#d8d8d8"/><rect x="9" y="0" width="4" height="4" fill="#d8d8d8"/><rect x="0" y="9" width="4" height="4" fill="#d8d8d8"/><rect x="9" y="9" width="4" height="4" fill="#d8d8d8"/></svg>
<svg style="left:1851px;top:596px" width="12" height="14"><path d="M3 1H8L11 4V12H6" fill="none" stroke="#d8d8d8" stroke-width="1.2"/><rect x="1" y="6" width="6" height="7" fill="#d8d8d8"/></svg>
<div class="a" style="left:1905px;top:595px;width:10px;height:19px;background:#404040;border-radius:5px"></div>
<div class="a" style="left:1905px;top:595px;width:10px;height:10px;background:#e6e6e6;border-radius:5px"></div>
<div class="a" style="left:1585px;top:616px;width:335px;height:1px;background:#474747"></div>
<div class="a" style="left:1590px;top:622px;width:183px;height:19px;background:#454545;border:1px solid #404040;border-radius:2px"></div>
<div class="t" style="left:1597px;top:627px;font-size:10px;color:#e6e6e6">Обычные</div>
<svg style="left:1761px;top:629px" width="9" height="6"><path d="M0.5 0.5L4.5 4.5L8.5 0.5" fill="none" stroke="#cfcfcf" stroke-width="1.1"/></svg>
<div class="t" style="left:1781px;top:627px;font-size:10px;color:#d9d9d9">Непрозрачность:</div>
<div class="a" style="left:1864px;top:623px;width:50px;height:17px;background:#474747;border:1px solid #404040"></div>
<div class="a" style="left:1899px;top:624px;width:1px;height:15px;background:#3c3c3c"></div>
<div class="t" style="left:1869px;top:627px;font-size:10px;color:#eeeeee">100%</div>
<svg style="left:1902px;top:629px" width="9" height="6"><path d="M0.5 0.5L4.5 4.5L8.5 0.5" fill="none" stroke="#cfcfcf" stroke-width="1.1"/></svg>
<div class="a" style="left:1585px;top:645px;width:335px;height:1px;background:#474747"></div>
<div class="t" style="left:1592px;top:655px;font-size:10px;color:#cfcfcf">Закрепить:</div>
<svg style="left:1652px;top:653px" width="12" height="12"><rect x="0.5" y="0.5" width="11" height="11" fill="none" stroke="#d8d8d8" stroke-width="1"/><path d="M1 1H4V4H1ZM7 1H10.5V4H7ZM4 4H7V7H4ZM1 7H4V10.5H1ZM7 7H10.5V10.5H7Z" fill="#d8d8d8"/></svg>
<svg style="left:1673px;top:652px" width="14" height="14"><path d="M13 0.5L7 7.5L8.5 9L13.8 1.5Z" fill="#d8d8d8"/><path d="M6.5 8C4.5 8 3.8 9.6 3.4 10.8C3 12 2.2 12.8 1 13.3C3.8 13.8 7 13.2 8 11C8.3 10 7.6 8.5 6.5 8Z" fill="#d8d8d8"/></svg>
<svg style="left:1695px;top:652px" width="14" height="14"><path d="M7 1V13M1 7H13" stroke="#d8d8d8" stroke-width="1.3"/><path d="M7 0L4.8 2.8H9.2ZM7 14L4.8 11.2H9.2ZM0 7L2.8 4.8V9.2ZM14 7L11.2 4.8V9.2Z" fill="#d8d8d8"/></svg>
<svg style="left:1718px;top:652px" width="14" height="14"><path d="M3 0V11H14M0 3H11V14" fill="none" stroke="#d8d8d8" stroke-width="1.2"/><path d="M8 6L13 1" stroke="#d8d8d8" stroke-width="1"/></svg>
<svg style="left:1741px;top:652px" width="12" height="14"><path d="M3 6V4C3 1 9 1 9 4V6" fill="none" stroke="#d8d8d8" stroke-width="1.5"/><rect x="1" y="6" width="10" height="7.5" fill="#d8d8d8"/><circle cx="6" cy="9.5" r="1.2" fill="#535353"/></svg>
<div class="t" style="left:1819px;top:655px;font-size:10px;color:#cfcfcf">Заливка:</div>
<div class="a" style="left:1864px;top:651px;width:50px;height:17px;background:#474747;border:1px solid #404040"></div>
<div class="a" style="left:1899px;top:652px;width:1px;height:15px;background:#3c3c3c"></div>
<div class="t" style="left:1869px;top:655px;font-size:10px;color:#eeeeee">100%</div>
<svg style="left:1902px;top:657px" width="9" height="6"><path d="M0.5 0.5L4.5 4.5L8.5 0.5" fill="none" stroke="#cfcfcf" stroke-width="1.1"/></svg><!--LAYERS START--><div class="a" style="left:1616px;top:675px;width:287px;height:30px;background:#676767"></div><div class="a" style="left:1585px;top:705px;width:318px;height:1px;background:#484848"></div><div class="a" style="left:1615px;top:675px;width:1px;height:30px;background:#4a4a4a"></div><svg style="left:1594px;top:686px" width="15" height="10"><path d="M0.5 5C2.5 1.5 5 0.4 7.5 0.4C10 0.4 12.5 1.5 14.5 5C12.5 8.5 10 9.6 7.5 9.6C5 9.6 2.5 8.5 0.5 5Z" fill="#e2e2e2"/><circle cx="7.5" cy="5" r="2.8" fill="#3a3a3a"/><circle cx="8.3" cy="4.2" r="0.8" fill="#bbbbbb"/></svg><div class="a" style="left:1620px;top:679px;width:32px;height:23px;border:1px solid #ffffff;background-color:#fff;background-image:linear-gradient(45deg,#cdcdcd 25%,transparent 25%,transparent 75%,#cdcdcd 75%),linear-gradient(45deg,#cdcdcd 25%,transparent 25%,transparent 75%,#cdcdcd 75%);background-size:8px 8px;background-position:0 0,4px 4px"></div><svg style="left:1617px;top:676px" width="38" height="29"><path d="M1 7V1H7M31 1H37V7M37 22V28H31M7 28H1V22" fill="none" stroke="#f0f0f0" stroke-width="1.3"/></svg><div class="t" style="left:1661px;top:686px;font-size:10px;color:#f0f0f0">Ток идёт по меньшему соп ратевлению</div><div class="a" style="left:1585px;top:736px;width:318px;height:1px;background:#484848"></div><div class="a" style="left:1615px;top:706px;width:1px;height:30px;background:#4a4a4a"></div><svg style="left:1594px;top:717px" width="15" height="10"><path d="M0.5 5C2.5 1.5 5 0.4 7.5 0.4C10 0.4 12.5 1.5 14.5 5C12.5 8.5 10 9.6 7.5 9.6C5 9.6 2.5 8.5 0.5 5Z" fill="#e2e2e2"/><circle cx="7.5" cy="5" r="2.8" fill="#3a3a3a"/><circle cx="8.3" cy="4.2" r="0.8" fill="#bbbbbb"/></svg><div class="a" style="left:1620px;top:711px;width:32px;height:22px;border:1px solid #1e1e1e;background-color:#fff;background-image:linear-gradient(45deg,#cdcdcd 25%,transparent 25%,transparent 75%,#cdcdcd 75%),linear-gradient(45deg,#cdcdcd 25%,transparent 25%,transparent 75%,#cdcdcd 75%);background-size:8px 8px;background-position:0 0,4px 4px"></div><div class="a" style="left:1637px;top:720px;width:15px;height:13px;background:#3a3a3a;border-top:1px solid #1e1e1e;border-left:1px solid #1e1e1e"></div><svg style="left:1639px;top:721px" width="12" height="11"><rect x="2" y="2" width="8" height="7" rx="1" fill="none" stroke="#e6e6e6" stroke-width="1"/><circle cx="2" cy="2" r="1.3" fill="#3a3a3a" stroke="#e6e6e6" stroke-width="0.9"/><circle cx="10" cy="2" r="1.3" fill="#3a3a3a" stroke="#e6e6e6" stroke-width="0.9"/><circle cx="2" cy="9" r="1.3" fill="#3a3a3a" stroke="#e6e6e6" stroke-width="0.9"/><circle cx="10" cy="9" r="1.3" fill="#3a3a3a" stroke="#e6e6e6" stroke-width="0.9"/></svg><div class="t" style="left:1661px;top:717px;font-size:10px;color:#e6e6e6">Фигура 42</div><div class="a" style="left:1585px;top:767px;width:318px;height:1px;background:#484848"></div><div class="a" style="left:1615px;top:737px;width:1px;height:30px;background:#4a4a4a"></div><svg style="left:1594px;top:748px" width="15" height="10"><path d="M0.5 5C2.5 1.5 5 0.4 7.5 0.4C10 0.4 12.5 1.5 14.5 5C12.5 8.5 10 9.6 7.5 9.6C5 9.6 2.5 8.5 0.5 5Z" fill="#e2e2e2"/><circle cx="7.5" cy="5" r="2.8" fill="#3a3a3a"/><circle cx="8.3" cy="4.2" r="0.8" fill="#bbbbbb"/></svg><div class="a" style="left:1620px;top:742px;width:32px;height:22px;border:1px solid #1e1e1e;background-color:#fff;background-image:linear-gradient(45deg,#cdcdcd 25%,transparent 25%,transparent 75%,#cdcdcd 75%),linear-gradient(45deg,#cdcdcd 25%,transparent 25%,transparent 75%,#cdcdcd 75%);background-size:8px 8px;background-position:0 0,4px 4px"></div><div class="a" style="left:1637px;top:751px;width:15px;height:13px;background:#3a3a3a;border-top:1px solid #1e1e1e;border-left:1px solid #1e1e1e"></div><svg style="left:1639px;top:752px" width="12" height="11"><rect x="2" y="2" width="8" height="7" rx="1" fill="none" stroke="#e6e6e6" stroke-width="1"/><circle cx="2" cy="2" r="1.3" fill="#3a3a3a" stroke="#e6e6e6" stroke-width="0.9"/><circle cx="10" cy="2" r="1.3" fill="#3a3a3a" stroke="#e6e6e6" stroke-width="0.9"/><circle cx="2" cy="9" r="1.3" fill="#3a3a3a" stroke="#e6e6e6" stroke-width="0.9"/><circle cx="10" cy="9" r="1.3" fill="#3a3a3a" stroke="#e6e6e6" stroke-width="0.9"/></svg><div class="t" style="left:1661px;top:748px;font-size:10px;color:#e6e6e6">Фигура 41</div><div class="a" style="left:1585px;top:798px;width:318px;height:1px;background:#484848"></div><div class="a" style="left:1615px;top:768px;width:1px;height:30px;background:#4a4a4a"></div><svg style="left:1594px;top:779px" width="15" height="10"><path d="M0.5 5C2.5 1.5 5 0.4 7.5 0.4C10 0.4 12.5 1.5 14.5 5C12.5 8.5 10 9.6 7.5 9.6C5 9.6 2.5 8.5 0.5 5Z" fill="#e2e2e2"/><circle cx="7.5" cy="5" r="2.8" fill="#3a3a3a"/><circle cx="8.3" cy="4.2" r="0.8" fill="#bbbbbb"/></svg><div class="a" style="left:1620px;top:773px;width:32px;height:22px;border:1px solid #1e1e1e;background-color:#fff;background-image:linear-gradient(45deg,#cdcdcd 25%,transparent 25%,transparent 75%,#cdcdcd 75%),linear-gradient(45deg,#cdcdcd 25%,transparent 25%,transparent 75%,#cdcdcd 75%);background-size:8px 8px;background-position:0 0,4px 4px"></div><div class="a" style="left:1637px;top:782px;width:15px;height:13px;background:#3a3a3a;border-top:1px solid #1e1e1e;border-left:1px solid #1e1e1e"></div><svg style="left:1639px;top:783px" width="12" height="11"><rect x="2" y="2" width="8" height="7" rx="1" fill="none" stroke="#e6e6e6" stroke-width="1"/><circle cx="2" cy="2" r="1.3" fill="#3a3a3a" stroke="#e6e6e6" stroke-width="0.9"/><circle cx="10" cy="2" r="1.3" fill="#3a3a3a" stroke="#e6e6e6" stroke-width="0.9"/><circle cx="2" cy="9" r="1.3" fill="#3a3a3a" stroke="#e6e6e6" stroke-width="0.9"/><circle cx="10" cy="9" r="1.3" fill="#3a3a3a" stroke="#e6e6e6" stroke-width="0.9"/></svg><div class="t" style="left:1661px;top:779px;font-size:10px;color:#e6e6e6">Фигура 40</div><div class="a" style="left:1585px;top:829px;width:318px;height:1px;background:#484848"></div><div class="a" style="left:1615px;top:799px;width:1px;height:30px;background:#4a4a4a"></div><svg style="left:1594px;top:810px" width="15" height="10"><path d="M0.5 5C2.5 1.5 5 0.4 7.5 0.4C10 0.4 12.5 1.5 14.5 5C12.5 8.5 10 9.6 7.5 9.6C5 9.6 2.5 8.5 0.5 5Z" fill="#e2e2e2"/><circle cx="7.5" cy="5" r="2.8" fill="#3a3a3a"/><circle cx="8.3" cy="4.2" r="0.8" fill="#bbbbbb"/></svg><div class="a" style="left:1620px;top:804px;width:32px;height:22px;border:1px solid #1e1e1e;background-color:#fff;background-image:linear-gradient(45deg,#cdcdcd 25%,transparent 25%,transparent 75%,#cdcdcd 75%),linear-gradient(45deg,#cdcdcd 25%,transparent 25%,transparent 75%,#cdcdcd 75%);background-size:8px 8px;background-position:0 0,4px 4px"></div><div class="a" style="left:1637px;top:813px;width:15px;height:13px;background:#3a3a3a;border-top:1px solid #1e1e1e;border-left:1px solid #1e1e1e"></div><svg style="left:1639px;top:814px" width="12" height="11"><rect x="2" y="2" width="8" height="7" rx="1" fill="none" stroke="#e6e6e6" stroke-width="1"/><circle cx="2" cy="2" r="1.3" fill="#3a3a3a" stroke="#e6e6e6" stroke-width="0.9"/><circle cx="10" cy="2" r="1.3" fill="#3a3a3a" stroke="#e6e6e6" stroke-width="0.9"/><circle cx="2" cy="9" r="1.3" fill="#3a3a3a" stroke="#e6e6e6" stroke-width="0.9"/><circle cx="10" cy="9" r="1.3" fill="#3a3a3a" stroke="#e6e6e6" stroke-width="0.9"/></svg><div class="t" style="left:1661px;top:810px;font-size:10px;color:#e6e6e6">Фигура 39</div><div class="a" style="left:1585px;top:860px;width:318px;height:1px;background:#484848"></div><div class="a" style="left:1615px;top:830px;width:1px;height:30px;background:#4a4a4a"></div><svg style="left:1594px;top:841px" width="15" height="10"><path d="M0.5 5C2.5 1.5 5 0.4 7.5 0.4C10 0.4 12.5 1.5 14.5 5C12.5 8.5 10 9.6 7.5 9.6C5 9.6 2.5 8.5 0.5 5Z" fill="#e2e2e2"/><circle cx="7.5" cy="5" r="2.8" fill="#3a3a3a"/><circle cx="8.3" cy="4.2" r="0.8" fill="#bbbbbb"/></svg><div class="a" style="left:1620px;top:835px;width:32px;height:22px;border:1px solid #1e1e1e;background-color:#fff;background-image:linear-gradient(45deg,#cdcdcd 25%,transparent 25%,transparent 75%,#cdcdcd 75%),linear-gradient(45deg,#cdcdcd 25%,transparent 25%,transparent 75%,#cdcdcd 75%);background-size:8px 8px;background-position:0 0,4px 4px"></div><div class="a" style="left:1637px;top:844px;width:15px;height:13px;background:#3a3a3a;border-top:1px solid #1e1e1e;border-left:1px solid #1e1e1e"></div><svg style="left:1639px;top:845px" width="12" height="11"><rect x="2" y="2" width="8" height="7" rx="1" fill="none" stroke="#e6e6e6" stroke-width="1"/><circle cx="2" cy="2" r="1.3" fill="#3a3a3a" stroke="#e6e6e6" stroke-width="0.9"/><circle cx="10" cy="2" r="1.3" fill="#3a3a3a" stroke="#e6e6e6" stroke-width="0.9"/><circle cx="2" cy="9" r="1.3" fill="#3a3a3a" stroke="#e6e6e6" stroke-width="0.9"/><circle cx="10" cy="9" r="1.3" fill="#3a3a3a" stroke="#e6e6e6" stroke-width="0.9"/></svg><div class="t" style="left:1661px;top:841px;font-size:10px;color:#e6e6e6">Фигура 38</div><div class="a" style="left:1585px;top:891px;width:318px;height:1px;background:#484848"></div><div class="a" style="left:1615px;top:861px;width:1px;height:30px;background:#4a4a4a"></div><svg style="left:1594px;top:872px" width="15" height="10"><path d="M0.5 5C2.5 1.5 5 0.4 7.5 0.4C10 0.4 12.5 1.5 14.5 5C12.5 8.5 10 9.6 7.5 9.6C5 9.6 2.5 8.5 0.5 5Z" fill="#e2e2e2"/><circle cx="7.5" cy="5" r="2.8" fill="#3a3a3a"/><circle cx="8.3" cy="4.2" r="0.8" fill="#bbbbbb"/></svg><div class="a" style="left:1620px;top:866px;width:32px;height:22px;border:1px solid #1e1e1e;background-color:#fff;background-image:linear-gradient(45deg,#cdcdcd 25%,transparent 25%,transparent 75%,#cdcdcd 75%),linear-gradient(45deg,#cdcdcd 25%,transparent 25%,transparent 75%,#cdcdcd 75%);background-size:8px 8px;background-position:0 0,4px 4px"></div><div class="a" style="left:1637px;top:875px;width:15px;height:13px;background:#3a3a3a;border-top:1px solid #1e1e1e;border-left:1px solid #1e1e1e"></div><svg style="left:1639px;top:876px" width="12" height="11"><rect x="2" y="2" width="8" height="7" rx="1" fill="none" stroke="#e6e6e6" stroke-width="1"/><circle cx="2" cy="2" r="1.3" fill="#3a3a3a" stroke="#e6e6e6" stroke-width="0.9"/><circle cx="10" cy="2" r="1.3" fill="#3a3a3a" stroke="#e6e6e6" stroke-width="0.9"/><circle cx="2" cy="9" r="1.3" fill="#3a3a3a" stroke="#e6e6e6" stroke-width="0.9"/><circle cx="10" cy="9" r="1.3" fill="#3a3a3a" stroke="#e6e6e6" stroke-width="0.9"/></svg><div class="t" style="left:1661px;top:872px;font-size:10px;color:#e6e6e6">Фигура 37</div><div class="a" style="left:1585px;top:922px;width:318px;height:1px;background:#484848"></div><div class="a" style="left:1615px;top:892px;width:1px;height:30px;background:#4a4a4a"></div><svg style="left:1594px;top:903px" width="15" height="10"><path d="M0.5 5C2.5 1.5 5 0.4 7.5 0.4C10 0.4 12.5 1.5 14.5 5C12.5 8.5 10 9.6 7.5 9.6C5 9.6 2.5 8.5 0.5 5Z" fill="#e2e2e2"/><circle cx="7.5" cy="5" r="2.8" fill="#3a3a3a"/><circle cx="8.3" cy="4.2" r="0.8" fill="#bbbbbb"/></svg><div class="a" style="left:1620px;top:897px;width:32px;height:22px;border:1px solid #1e1e1e;background-color:#fff;background-image:linear-gradient(45deg,#cdcdcd 25%,transparent 25%,transparent 75%,#cdcdcd 75%),linear-gradient(45deg,#cdcdcd 25%,transparent 25%,transparent 75%,#cdcdcd 75%);background-size:8px 8px;background-position:0 0,4px 4px"></div><div class="a" style="left:1637px;top:906px;width:15px;height:13px;background:#3a3a3a;border-top:1px solid #1e1e1e;border-left:1px solid #1e1e1e"></div><svg style="left:1639px;top:907px" width="12" height="11"><rect x="2" y="2" width="8" height="7" rx="1" fill="none" stroke="#e6e6e6" stroke-width="1"/><circle cx="2" cy="2" r="1.3" fill="#3a3a3a" stroke="#e6e6e6" stroke-width="0.9"/><circle cx="10" cy="2" r="1.3" fill="#3a3a3a" stroke="#e6e6e6" stroke-width="0.9"/><circle cx="2" cy="9" r="1.3" fill="#3a3a3a" stroke="#e6e6e6" stroke-width="0.9"/><circle cx="10" cy="9" r="1.3" fill="#3a3a3a" stroke="#e6e6e6" stroke-width="0.9"/></svg><div class="t" style="left:1661px;top:903px;font-size:10px;color:#e6e6e6">Фигура 36</div><div class="a" style="left:1585px;top:953px;width:318px;height:1px;background:#484848"></div><div class="a" style="left:1615px;top:923px;width:1px;height:30px;background:#4a4a4a"></div><svg style="left:1594px;top:934px" width="15" height="10"><path d="M0.5 5C2.5 1.5 5 0.4 7.5 0.4C10 0.4 12.5 1.5 14.5 5C12.5 8.5 10 9.6 7.5 9.6C5 9.6 2.5 8.5 0.5 5Z" fill="#e2e2e2"/><circle cx="7.5" cy="5" r="2.8" fill="#3a3a3a"/><circle cx="8.3" cy="4.2" r="0.8" fill="#bbbbbb"/></svg><div class="a" style="left:1620px;top:928px;width:32px;height:22px;border:1px solid #1e1e1e;background-color:#fff;background-image:linear-gradient(45deg,#cdcdcd 25%,transparent 25%,transparent 75%,#cdcdcd 75%),linear-gradient(45deg,#cdcdcd 25%,transparent 25%,transparent 75%,#cdcdcd 75%);background-size:8px 8px;background-position:0 0,4px 4px"></div><div class="a" style="left:1637px;top:937px;width:15px;height:13px;background:#3a3a3a;border-top:1px solid #1e1e1e;border-left:1px solid #1e1e1e"></div><svg style="left:1639px;top:938px" width="12" height="11"><rect x="2" y="2" width="8" height="7" rx="1" fill="none" stroke="#e6e6e6" stroke-width="1"/><circle cx="2" cy="2" r="1.3" fill="#3a3a3a" stroke="#e6e6e6" stroke-width="0.9"/><circle cx="10" cy="2" r="1.3" fill="#3a3a3a" stroke="#e6e6e6" stroke-width="0.9"/><circle cx="2" cy="9" r="1.3" fill="#3a3a3a" stroke="#e6e6e6" stroke-width="0.9"/><circle cx="10" cy="9" r="1.3" fill="#3a3a3a" stroke="#e6e6e6" stroke-width="0.9"/></svg><div class="t" style="left:1661px;top:934px;font-size:10px;color:#e6e6e6">Фигура 35</div><div class="a" style="left:1585px;top:984px;width:318px;height:1px;background:#484848"></div><div class="a" style="left:1615px;top:954px;width:1px;height:30px;background:#4a4a4a"></div><svg style="left:1594px;top:965px" width="15" height="10"><path d="M0.5 5C2.5 1.5 5 0.4 7.5 0.4C10 0.4 12.5 1.5 14.5 5C12.5 8.5 10 9.6 7.5 9.6C5 9.6 2.5 8.5 0.5 5Z" fill="#e2e2e2"/><circle cx="7.5" cy="5" r="2.8" fill="#3a3a3a"/><circle cx="8.3" cy="4.2" r="0.8" fill="#bbbbbb"/></svg><div class="a" style="left:1620px;top:959px;width:32px;height:22px;border:1px solid #1e1e1e;background-color:#fff;background-image:linear-gradient(45deg,#cdcdcd 25%,transparent 25%,transparent 75%,#cdcdcd 75%),linear-gradient(45deg,#cdcdcd 25%,transparent 25%,transparent 75%,#cdcdcd 75%);background-size:8px 8px;background-position:0 0,4px 4px"></div><div class="a" style="left:1637px;top:968px;width:15px;height:13px;background:#3a3a3a;border-top:1px solid #1e1e1e;border-left:1px solid #1e1e1e"></div><svg style="left:1639px;top:969px" width="12" height="11"><rect x="2" y="2" width="8" height="7" rx="1" fill="none" stroke="#e6e6e6" stroke-width="1"/><circle cx="2" cy="2" r="1.3" fill="#3a3a3a" stroke="#e6e6e6" stroke-width="0.9"/><circle cx="10" cy="2" r="1.3" fill="#3a3a3a" stroke="#e6e6e6" stroke-width="0.9"/><circle cx="2" cy="9" r="1.3" fill="#3a3a3a" stroke="#e6e6e6" stroke-width="0.9"/><circle cx="10" cy="9" r="1.3" fill="#3a3a3a" stroke="#e6e6e6" stroke-width="0.9"/></svg><div class="t" style="left:1661px;top:965px;font-size:10px;color:#e6e6e6">Фигура 34</div><div class="a" style="left:1585px;top:1015px;width:318px;height:1px;background:#484848"></div><div class="a" style="left:1615px;top:985px;width:1px;height:30px;background:#4a4a4a"></div><svg style="left:1594px;top:996px" width="15" height="10"><path d="M0.5 5C2.5 1.5 5 0.4 7.5 0.4C10 0.4 12.5 1.5 14.5 5C12.5 8.5 10 9.6 7.5 9.6C5 9.6 2.5 8.5 0.5 5Z" fill="#e2e2e2"/><circle cx="7.5" cy="5" r="2.8" fill="#3a3a3a"/><circle cx="8.3" cy="4.2" r="0.8" fill="#bbbbbb"/></svg><div class="a" style="left:1620px;top:990px;width:32px;height:22px;border:1px solid #1e1e1e;background-color:#fff;background-image:linear-gradient(45deg,#cdcdcd 25%,transparent 25%,transparent 75%,#cdcdcd 75%),linear-gradient(45deg,#cdcdcd 25%,transparent 25%,transparent 75%,#cdcdcd 75%);background-size:8px 8px;background-position:0 0,4px 4px"></div><div class="a" style="left:1637px;top:999px;width:15px;height:13px;background:#3a3a3a;border-top:1px solid #1e1e1e;border-left:1px solid #1e1e1e"></div><svg style="left:1639px;top:1000px" width="12" height="11"><rect x="2" y="2" width="8" height="7" rx="1" fill="none" stroke="#e6e6e6" stroke-width="1"/><circle cx="2" cy="2" r="1.3" fill="#3a3a3a" stroke="#e6e6e6" stroke-width="0.9"/><circle cx="10" cy="2" r="1.3" fill="#3a3a3a" stroke="#e6e6e6" stroke-width="0.9"/><circle cx="2" cy="9" r="1.3" fill="#3a3a3a" stroke="#e6e6e6" stroke-width="0.9"/><circle cx="10" cy="9" r="1.3" fill="#3a3a3a" stroke="#e6e6e6" stroke-width="0.9"/></svg><div class="t" style="left:1661px;top:996px;font-size:10px;color:#e6e6e6">Фигура 33</div><!--LAYERS END-->
<div class="a" style="left:1903px;top:675px;width:17px;height:333px;background:#4b4b4b"></div>
<svg style="left:1907px;top:683px" width="9" height="6"><path d="M0.5 5L4.5 1L8.5 5" fill="none" stroke="#8a8a8a" stroke-width="1.1"/></svg>
<div class="a" style="left:1905px;top:693px;width:10px;height:69px;background:#6a6a6a"></div>
<svg style="left:1907px;top:1001px" width="9" height="6"><path d="M0.5 0.5L4.5 4.5L8.5 0.5" fill="none" stroke="#8a8a8a" stroke-width="1.1"/></svg>

<svg style="left:1716px;top:1021px" width="15" height="9"><path d="M5 1H3.5C1.5 1 0.7 2.5 0.7 4.5C0.7 6.5 1.5 8 3.5 8H5M10 1H11.5C13.5 1 14.3 2.5 14.3 4.5C14.3 6.5 13.5 8 11.5 8H10M4.5 4.5H10.5" fill="none" stroke="#8c8c8c" stroke-width="1.3"/></svg>
<div class="t" style="left:1745px;top:1017px;font-size:14px;font-style:italic;font-family:'Liberation Serif',serif;color:#dcdcdc">fx</div>
<div class="a" style="left:1757px;top:1032px;width:3px;height:2px;background:#dcdcdc"></div>
<svg style="left:1771px;top:1020px" width="14" height="11"><rect x="0" y="0" width="14" height="11" fill="#dcdcdc"/><circle cx="7" cy="5.5" r="3.3" fill="#535353"/></svg>
<svg style="left:1798px;top:1019px" width="15" height="15"><circle cx="7" cy="6.5" r="5.5" fill="none" stroke="#dcdcdc" stroke-width="1.3"/><path d="M10.9 2.6A5.5 5.5 0 0 1 3.1 10.4Z" fill="#dcdcdc"/><rect x="11" y="13" width="3" height="1.5" fill="#dcdcdc"/></svg>
<svg style="left:1825px;top:1020px" width="14" height="12"><path d="M0 0H5L6.5 1.5H14V11H0Z" fill="#dcdcdc"/></svg>
<svg style="left:1852px;top:1019px" width="13" height="13"><rect x="0.6" y="0.6" width="11.8" height="11.8" fill="none" stroke="#dcdcdc" stroke-width="1.2"/><path d="M6.5 3V10M3 6.5H10" stroke="#dcdcdc" stroke-width="1.2"/></svg>
<svg style="left:1879px;top:1018px" width="13" height="15"><path d="M0 2.5H13M4.5 2.5V0.8H8.5V2.5" fill="none" stroke="#dcdcdc" stroke-width="1.2"/><path d="M1.8 4H11.2V14H1.8Z" fill="none" stroke="#dcdcdc" stroke-width="1.2"/><path d="M4.5 6V12M6.5 6V12M8.5 6V12" stroke="#dcdcdc" stroke-width="1"/></svg>

<!-- TASKBAR -->
<div class="a" style="left:0;top:1039px;width:1920px;height:41px;background:#25333b"></div>

<!-- TASKBAR CONTENT -->
<svg style="left:16px;top:1052px" width="16" height="16"><path d="M0 2.2L6.6 1.3V7.5H0ZM7.4 1.2L16 0V7.5H7.4ZM0 8.3H6.6V14.7L0 13.8ZM7.4 8.3H16V16L7.4 14.8Z" fill="#ffffff"/></svg>
<svg style="left:64px;top:1052px" width="17" height="17"><circle cx="10.5" cy="6.5" r="5.6" fill="none" stroke="#fff" stroke-width="1.3"/><path d="M6.5 10.5L1 16" stroke="#fff" stroke-width="1.5"/></svg>
<svg style="left:111px;top:1052px" width="18" height="17"><path d="M1 1H10M1 15H10" stroke="#fff" stroke-width="1.2"/><rect x="1.5" y="4" width="8" height="8" fill="none" stroke="#fff" stroke-width="1.2"/><path d="M13.5 1V15" stroke="#fff" stroke-width="1.2"/><rect x="12.3" y="4.5" width="3" height="3" fill="#fff"/></svg>
<!-- PowerPoint 2007 -->
<div class="a" style="left:160px;top:1049px;width:21px;height:21px;background:linear-gradient(135deg,#f6c08c,#d86a2a);border-radius:2px;border:1px solid #b0521c"></div>
<div class="a" style="left:163px;top:1052px;width:15px;height:14px;background:#f3e0cc;border:1px solid #c0662a"></div>
<div class="a" style="left:165px;top:1055px;width:6px;height:6px;border-radius:3px;background:#d9743a"></div>
<div class="a" style="left:172px;top:1056px;width:4px;height:4px;background:#d9743a"></div>
<!-- Excel new -->
<div class="a" style="left:214px;top:1051px;width:17px;height:18px;background:#eef3ee;border:1px solid #1e7145"></div>
<div class="a" style="left:209px;top:1049px;width:13px;height:22px;background:#1f7246;clip-path:polygon(0 8%,100% 0,100% 100%,0 92%)"></div>
<div class="t" style="left:212px;top:1054px;font-size:11px;font-weight:bold;color:#fff">X</div>
<div class="a" style="left:223px;top:1054px;width:6px;height:12px;background:repeating-linear-gradient(180deg,#1e7145 0 1px,transparent 1px 3px)"></div>
<!-- Excel 2007 -->
<div class="a" style="left:258px;top:1049px;width:21px;height:21px;background:linear-gradient(135deg,#c9e8b8,#6fae4a);border:1px solid #5b8f3c;border-radius:2px"></div>
<div class="a" style="left:261px;top:1052px;width:15px;height:15px;background:#e6f2df"></div>
<svg style="left:261px;top:1052px" width="16" height="16"><path d="M1 2L14 14M14 2L4 12" stroke="#3d8c2e" stroke-width="3.2"/></svg>
<!-- Opera -->
<svg style="left:306px;top:1048px" width="23" height="23"><ellipse cx="11.5" cy="11.5" rx="10.5" ry="11" fill="#d21d27"/><ellipse cx="11.5" cy="11.5" rx="4.3" ry="8" fill="#25333b"/></svg>
<div class="a" style="left:298px;top:1078px;width:40px;height:2px;background:#8ab5d9"></div>
<!-- Chrome -->
<svg style="left:355px;top:1048px" width="23" height="23"><circle cx="11.5" cy="11.5" r="11" fill="#db4437"/><path d="M11.5 11.5L1.97 6L1.97 17A11 11 0 0 0 11.5 22.5Z" fill="#0f9d58"/><path d="M11.5 11.5L11.5 22.5A11 11 0 0 0 21.03 17L21.03 6Z" fill="#0f9d58"/><path d="M11.5 11.5L21.03 6A11 11 0 0 1 21.03 17L11.5 22.5Z" fill="#ffcd40"/><path d="M11.5 11.5L1.97 6A11 11 0 0 1 21.03 6Z" fill="#db4437"/><path d="M11.5 11.5L11.5 22.5A11 11 0 0 1 1.97 17Z" fill="#0f9d58"/><circle cx="11.5" cy="11.5" r="5" fill="#fff"/><circle cx="11.5" cy="11.5" r="4" fill="#4285f4"/></svg>
<div class="a" style="left:347px;top:1078px;width:39px;height:2px;background:#8ab5d9"></div>
<!-- Word 2003 -->
<div class="a" style="left:405px;top:1049px;width:21px;height:21px;background:linear-gradient(135deg,#c7d7f2,#6f8fd0);border:1px solid #3e5fae"></div>
<div class="t" style="left:407px;top:1052px;font-size:15px;font-weight:bold;font-style:italic;font-family:'Liberation Serif',serif;color:#1d3f9a">W</div>
<!-- Word new -->
<div class="a" style="left:460px;top:1051px;width:16px;height:18px;background:#eef2f9;border:1px solid #2b579a"></div>
<div class="a" style="left:454px;top:1049px;width:13px;height:22px;background:#2b579a;clip-path:polygon(0 8%,100% 0,100% 100%,0 92%)"></div>
<div class="t" style="left:455px;top:1054px;font-size:10px;font-weight:bold;color:#fff">W</div>
<div class="a" style="left:468px;top:1054px;width:6px;height:12px;background:repeating-linear-gradient(180deg,#2b579a 0 1px,transparent 1px 3px)"></div>
<!-- PowerPoint new -->
<div class="a" style="left:508px;top:1051px;width:17px;height:18px;background:#f5e6e0;border:1px solid #b7472a"></div>
<div class="a" style="left:502px;top:1049px;width:13px;height:22px;background:#d24726;clip-path:polygon(0 8%,100% 0,100% 100%,0 92%)"></div>
<div class="t" style="left:504px;top:1054px;font-size:10px;font-weight:bold;color:#fff">P</div>
<svg style="left:515px;top:1053px" width="9" height="13"><circle cx="4.5" cy="4" r="3.5" fill="none" stroke="#d24726" stroke-width="1.3"/><path d="M1 9H8M1 11H8" stroke="#d24726" stroke-width="1"/></svg>
<!-- DEV -->
<div class="a" style="left:551px;top:1048px;width:23px;height:23px;background:linear-gradient(180deg,#2a4fa8 0,#2a4fa8 50%,#1f5fcf 50%);border:1px solid #1a3c86"></div>
<div class="t" style="left:552px;top:1051px;font-size:8.5px;font-weight:bold;color:#fff">DEV</div>
<svg style="left:553px;top:1060px" width="19" height="9"><path d="M1 4.5H18M4 1.5C6 1.5 6 7.5 4 7.5M15 1.5C13 1.5 13 7.5 15 7.5" fill="none" stroke="#9fd0ff" stroke-width="1.6"/></svg>
<!-- Fax -->
<svg style="left:600px;top:1049px" width="24" height="22"><path d="M8 1L20 3L17 12L5 10Z" fill="#f3f3f3" stroke="#9aa" stroke-width="0.8"/><path d="M2 11L16 11L22 14L21 20L3 20L1 16Z" fill="#d9dde0" stroke="#888" stroke-width="0.8"/><rect x="6" y="13" width="9" height="3" fill="#7f9fc2"/></svg>
<!-- Photoshop active -->
<div class="a" style="left:637px;top:1039px;width:48px;height:41px;background:#47555c"></div>
<div class="a" style="left:637px;top:1078px;width:48px;height:2px;background:#7fc0f0"></div>
<div class="a" style="left:650px;top:1049px;width:22px;height:21px;background:#001e36;border-radius:4px;border:1px solid #0a2a44"></div>
<div class="t" style="left:653px;top:1054px;font-size:12px;font-weight:bold;color:#31a8ff">Ps</div>
<!-- tray -->
<svg style="left:1722px;top:1056px" width="14" height="8"><path d="M1 7L7 1L13 7" fill="none" stroke="#fff" stroke-width="1.3"/></svg>
<svg style="left:1745px;top:1053px" width="17" height="14"><path d="M1 4.5H3.5L7.5 1V13L3.5 9.5H1Z" fill="none" stroke="#fff" stroke-width="1.1"/><path d="M10 4.5C11 5.5 11 8.5 10 9.5M12 3C14 5 14 9 12 11M14 1.5C17 4.5 17 9.5 14 12.5" fill="none" stroke="#fff" stroke-width="1.1"/></svg>
<div class="t" style="left:1772px;top:1054px;font-size:11px;color:#fff">РУС</div>
<div class="t" style="left:1820px;top:1045px;font-size:10.5px;color:#fff">20:27</div>
<div class="t" style="left:1807px;top:1063px;font-size:10.5px;color:#fff">16.10.2021</div>
<svg style="left:1878px;top:1052px" width="18" height="17"><path d="M1 1H17V12H11L8.5 15.5L6 12H1Z" fill="none" stroke="#fff" stroke-width="1.2"/></svg>
<div class="a" style="left:1915px;top:1039px;width:1px;height:41px;background:#5a6a72"></div>

</body></html>
